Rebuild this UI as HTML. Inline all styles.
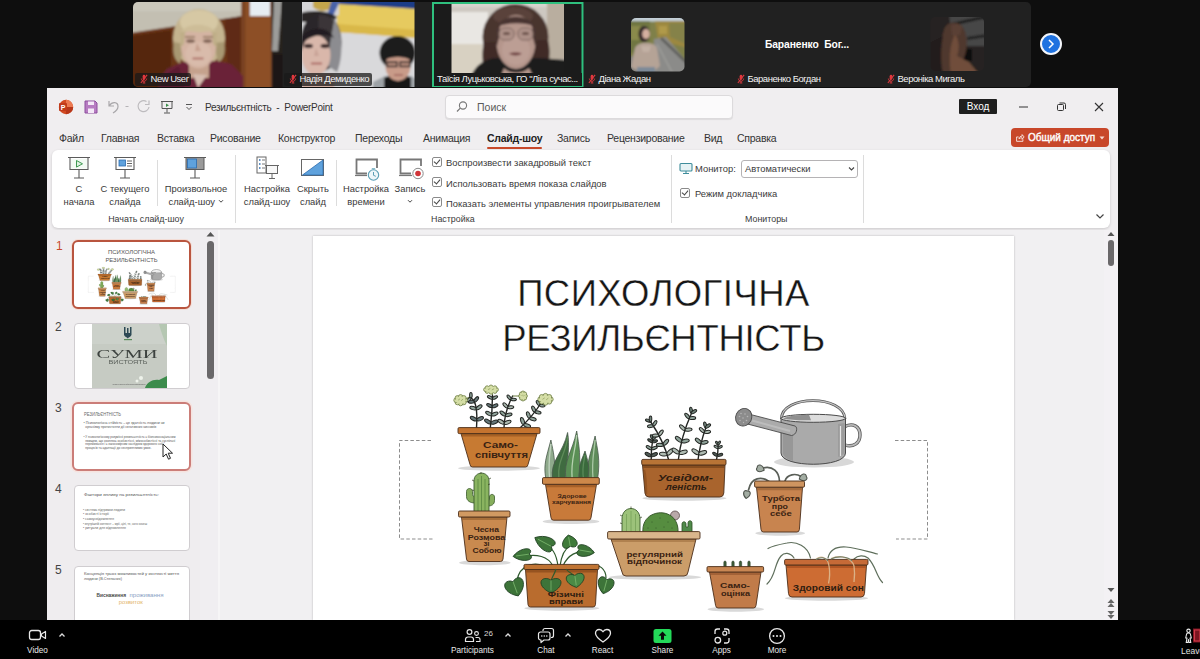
<!DOCTYPE html>
<html lang="uk"><head><meta charset="utf-8"><title>Zoom - PowerPoint</title>
<style>
*{box-sizing:border-box;margin:0;padding:0}
html,body{width:1200px;height:659px;overflow:hidden;background:#0e0e0e;font-family:"Liberation Sans",sans-serif;}
.abs{position:absolute}
#root{position:relative;width:1200px;height:659px;overflow:hidden;background:#0e0e0e}
/* video strip */
#strip{left:133px;top:2px;width:898px;height:85px;background:#212121;border-radius:5px;overflow:hidden}
.tile{position:absolute;top:0;height:85px;overflow:hidden}
.nm{position:absolute;bottom:1.500px;left:0;height:13px;font-size:9.500px;letter-spacing:-.48px;color:#f2f2f2;line-height:12.500px;white-space:nowrap;padding:0 3px 0 15.500px;background:rgba(25,25,25,.75);border-radius:2px}
.nm.nobg{background:none}
.mic{position:absolute;left:4.500px;top:1.500px;width:8px;height:10px}
/* ppt */
#ppt{left:47px;top:88px;width:1071px;height:532px;background:#f0eef0;overflow:hidden}
.tab{position:absolute;top:44px;font-size:10.5px;letter-spacing:-.25px;color:#333;white-space:nowrap;line-height:13px}
.rl{position:absolute;font-size:9.4px;color:#3a3a3a;white-space:nowrap;line-height:13px;text-align:center}
.chk{position:absolute;width:10px;height:10px;border:1px solid #8a8a8a;border-radius:2px;background:#fff}
.chk:after{content:"";position:absolute;left:2px;top:0px;width:3px;height:5px;border:solid #444;border-width:0 1.1px 1.1px 0;transform:rotate(40deg)}
.sep{position:absolute;width:1px;background:#dcdcdc}
.th{position:absolute;left:27px;width:116px;height:66px;background:#fff;border:1px solid #d0cdd0;border-radius:4px;overflow:hidden}
.tn{position:absolute;left:8px;font-size:12px;color:#444}
/* bottom bar */
#bar{left:0;top:620px;width:1200px;height:39px;background:#000}
#bar>*{margin-top:1px}
.bl{position:absolute;top:25px;font-size:8.2px;color:#e8e8e8;white-space:nowrap;transform:translateX(-50%);line-height:10px}
</style></head><body><div id="root">

<!-- VIDEO STRIP -->
<div id="strip" class="abs">
<svg class="abs" style="left:0;top:0" width="898" height="85" viewBox="0 0 898 85">
<defs>
<filter id="b1" x="-10%" y="-10%" width="120%" height="120%"><feGaussianBlur stdDeviation="1.100"/></filter>
<filter id="b2" x="-10%" y="-10%" width="120%" height="120%"><feGaussianBlur stdDeviation="2.200"/></filter>
<clipPath id="c1"><rect x="0" y="0" width="149.500" height="85"/></clipPath>
<clipPath id="c2"><rect x="169" y="0" width="112.500" height="85"/></clipPath>
<clipPath id="c3"><rect x="318.500" y="1.500" width="112.500" height="70"/></clipPath>
<clipPath id="c4"><rect x="498" y="16" width="53.500" height="53.500" rx="5"/></clipPath>
<clipPath id="c6"><rect x="797.500" y="15" width="53.500" height="54" rx="5"/></clipPath>
</defs>
<!-- tile 1 -->
<g clip-path="url(#c1)"><g filter="url(#b1)">
<rect x="-3" y="-3" width="155" height="91" fill="#c3bfb2"/>
<rect x="-3" y="-3" width="155" height="12" fill="#cbc8bc"/>
<path d="M-3 31L109 14v74H-3z" fill="#6a3419"/>
<path d="M-3 34L38 28v60H-3z" fill="#552710"/>
<path d="M92 17l17-3v74H96z" fill="#5e2c14"/>
<rect x="108.500" y="-3" width="31" height="91" fill="#8d4f26"/>
<rect x="108.500" y="-3" width="4" height="91" fill="#7a4220"/>
<rect x="117" y="-3" width="20" height="17" fill="#e6edf3"/>
<rect x="138.500" y="-3" width="14" height="91" fill="#26211f"/>
<path d="M141 -3h8l-4 52h-6z" fill="#9c9c9a"/>
<path d="M139 52h12v36h-12z" fill="#1d1918"/>
<ellipse cx="66" cy="36" rx="26" ry="29" fill="#c4b48f"/>
<ellipse cx="66" cy="20" rx="19" ry="12" fill="#d6c8a4"/>
<path d="M41 40c-2 10 0 18 6 22l4-20zM91 40c2 10 0 17-6 21l-4-20z" fill="#a89872"/>
<path d="M50 60l-16 7-8 10v12h84V74l-12-12-14-3z" fill="#6b2439"/>
<path d="M30 74l16-10 6 24H26z" fill="#5c1c30"/>
<rect x="56" y="58" width="20" height="18" fill="#c5a28d"/>
<ellipse cx="65.500" cy="45" rx="17.500" ry="21.500" fill="#d4b4a3"/>
<ellipse cx="65.500" cy="52" rx="13" ry="12" fill="#d9bbab"/>
<path d="M48 30c6-9 26-10 35 0-8-2-13 1-19 0s-11-1-16 0z" fill="#cdbd98"/>
<path d="M47 30c1 6 1 10 0 16l4-4 1-12zM84 30c-1 6-1 10 0 16l-4-4-1-12z" fill="#bfae88"/>
<path d="M52 35h10M70 35h10" stroke="#8a6f58" stroke-width="1.300"/>
<ellipse cx="57.500" cy="39" rx="4.500" ry="1.800" fill="#7d6152"/>
<ellipse cx="74.500" cy="39" rx="4.500" ry="1.800" fill="#7d6152"/>
<path d="M64 41l-2 8h6z" fill="#c6a08e"/>
<path d="M59.500 56.500h11" stroke="#a8665f" stroke-width="1.700" fill="none"/>
<path d="M60 72l5 14 9-13z" fill="#d6bdb0"/>
</g></g>
<!-- tile 2 -->
<g clip-path="url(#c2)"><g filter="url(#b1)">
<rect x="166" y="-3" width="119" height="91" fill="#d3d3d5"/>
<rect x="206" y="30" width="80" height="58" fill="#d9d9db"/>
<path d="M204 0L285 6v30L204 30z" fill="#e6ca5e"/>
<path d="M204 22l81 6v8l-81-6z" fill="#d9b84a"/>
<path d="M206 -3h79v10L206 2z" fill="#1f3d88"/>
<rect x="166" y="-3" width="40" height="16" fill="#d6d6d8"/>
<path d="M180 -3h20v8c-5 5-15 5-20 0z" fill="#c5a64c"/>
<path d="M199 -3h9l-8 17h-6z" fill="#4a62a8"/>
<path d="M168 11c10-3 26-3 36 4l-4 5h-32z" fill="#2a2627"/>
<ellipse cx="188" cy="40" rx="20.500" ry="29" fill="#2c2729"/>
<path d="M199 16c11 8 12 38 5 54l-9-6z" fill="#8c8c90"/>
<path d="M186 13c6 0 12 2 15 6l-4 22-12-10z" fill="#3a3537"/>
<ellipse cx="183" cy="53" rx="14.500" ry="20" fill="#d9b7aa"/>
<path d="M169 72h32v16h-32z" fill="#d2afa2"/>
<path d="M168 38c4-14 26-16 33-2-8-5-22-4-33 6z" fill="#231e20"/>
<ellipse cx="175.500" cy="44" rx="4.500" ry="2.200" fill="#3a2a2c"/>
<ellipse cx="192" cy="44" rx="4.500" ry="2.200" fill="#3a2a2c"/>
<path d="M183 46l-2 8h5z" fill="#c9a397"/>
<path d="M178 61.500h11" stroke="#a8605c" stroke-width="1.800"/>
<ellipse cx="264.500" cy="51" rx="18" ry="17" fill="#1e1b1b"/>
<path d="M240 88v-8l12-6h26l7 4v10z" fill="#9da2a6"/>
<path d="M251 88v-12c6-4 22-4 27 0v12z" fill="#151515"/>
<ellipse cx="265" cy="64" rx="12.500" ry="15" fill="#c99b89"/>
<path d="M250 52c6-8 23-8 29 0l-1 6c-8-4-18-4-27 0z" fill="#1e1b1b"/>
<path d="M254 60h10v4.500h-10zM267 60h10v4.500h-10z" fill="#b58a7a" stroke="#2a2424" stroke-width="1.300"/>
<path d="M261 73h9" stroke="#9a5f58" stroke-width="1.400"/>
</g></g>
<!-- tile 3 -->
<rect x="299" y="0" width="151.500" height="85" fill="#1b1b1b"/>
<g clip-path="url(#c3)"><g filter="url(#b1)">
<rect x="315" y="-3" width="120" height="80" fill="#cdc8c1"/>
<rect x="315" y="-3" width="120" height="8" fill="#d8d4cf"/>
<rect x="315" y="10" width="40" height="32" fill="#e9e7e3"/>
<rect x="315" y="42" width="34" height="35" fill="#d8d1c2"/>
<rect x="414" y="-3" width="20" height="60" fill="#b9ae9f"/>
<ellipse cx="382.500" cy="35" rx="33" ry="33" fill="#49342f"/>
<ellipse cx="380" cy="14" rx="20" ry="9" fill="#5a423b"/>
<path d="M351 40c-3 14-2 24 4 34h56c6-12 7-24 4-36z" fill="#3f2c28"/>
<path d="M338 74c6-14 18-18 28-18h40l28 2v18z" fill="#1b1b1d"/>
<ellipse cx="383" cy="40" rx="19.500" ry="27" fill="#b5968c"/>
<ellipse cx="383" cy="48" rx="14" ry="15" fill="#bc9e94"/>
<path d="M363 25c8-14 32-14 40 0-10-5-28-5-40 0z" fill="#4a3530"/>
<path d="M363 24c-1 8-1 14 1 20l4-16zM403 24c1 8 1 14-1 20l-4-16z" fill="#4a3530"/>
<rect x="366" y="26" width="15" height="12" rx="5" fill="#ad9188" stroke="#7d675f" stroke-width="1"/>
<rect x="385" y="26" width="15" height="12" rx="5" fill="#ad9188" stroke="#7d675f" stroke-width="1"/>
<ellipse cx="373.500" cy="31.500" rx="3.500" ry="1.500" fill="#6a5048"/>
<ellipse cx="392.500" cy="31.500" rx="3.500" ry="1.500" fill="#6a5048"/>
<path d="M376 51.500c3-1.500 10-1.500 13 0c-3 2.500-10 2.500-13 0z" fill="#6e3f40"/>
<path d="M371 66c6 6 18 6 25 0l4 8h-32z" fill="#b3958a"/>
</g></g>
<rect x="300" y="1" width="149.500" height="83.500" fill="none" stroke="#2fc07e" stroke-width="2"/>
<!-- tile 4 avatar -->
<g clip-path="url(#c4)"><g filter="url(#b1)">
<rect x="495" y="13" width="60" height="60" fill="#7f8049"/>
<rect x="495" y="13" width="60" height="6.500" fill="#c3cfd7"/>
<path d="M495 19h22v32h-22z" fill="#6f7642"/>
<path d="M498 24h10v14h-10z" fill="#8a8a4c"/>
<path d="M522 19h33v27l-30-8z" fill="#9c883f"/>
<path d="M536 21h19v22l-18-8z" fill="#85824a"/>
<path d="M526 24h8v8h-8z" fill="#b09a48"/>
<path d="M521 37l12-2 23 27v12h-36z" fill="#8b8b89"/>
<path d="M528 36l27 26" stroke="#5f5f5b" stroke-width="2.600"/>
<path d="M524 42l16 30" stroke="#9d9d9a" stroke-width="1.500"/>
<path d="M495 56l14-6v23h-14z" fill="#82827e"/>
<ellipse cx="511" cy="32" rx="5.500" ry="8" fill="#33272a"/>
<ellipse cx="513" cy="32" rx="3.800" ry="5" fill="#d4b0a0"/>
<path d="M502 46c3-7 19-7 22 0l3 18-6 5h-16l-7-4z" fill="#b5a396"/>
<path d="M508 44h10l-2 6h-6z" fill="#c2b0a4"/>
<path d="M504 65h18v8h-18z" fill="#7d8a98"/>
</g></g>
<!-- tile 6 avatar -->
<g clip-path="url(#c6)"><g filter="url(#b1)">
<rect x="794" y="12" width="60" height="60" fill="#272422"/>
<path d="M816 12h38v32h-34z" fill="#474747"/>
<path d="M818 21l36-8v3l-36 8z" fill="#1c1c1c"/>
<path d="M834 35l20-3v3l-20 3z" fill="#222"/>
<rect x="830" y="47" width="9" height="12" fill="#0e0e0e"/>
<path d="M811 28c2-8 12-10 18-4 6 8 6 22 2 32l-8 16h-14c-4-14-2-32 2-44z" fill="#4f382e"/>
<path d="M822 32c4 6 5 14 2 22l12 6 10 12h-28c-2-12-2-28 4-40z" fill="#6f4d3a"/>
<path d="M818 24c3-3 8-3 11 1l-2 8h-8z" fill="#5a4034"/>
<path d="M810 34c-2 10-3 24 0 38h-16v-30z" fill="#211e1d"/>
</g></g>
<!-- tile5 -->
</svg>
<div class="abs" style="left:600px;top:35.500px;width:148px;text-align:center;font-size:10.300px;font-weight:bold;color:#fff;line-height:14px;white-space:pre;letter-spacing:-.1px">Бараненко  Бог...</div>
<div class="nm" style="left:2px"><svg class="mic" viewBox="0 0 9 11"><rect x="3" y=".8" width="3" height="5.500" rx="1.500" fill="#e0383e"/><path d="M1.500 5c0 4 6 4 6 0M4.500 8v2M3 10h3" fill="none" stroke="#e0383e" stroke-width="1"/><path d="M8 .8L1 10" stroke="#e0383e" stroke-width="1.200"/></svg><span>New User</span></div>
<div class="nm" style="left:151px"><svg class="mic" viewBox="0 0 9 11"><rect x="3" y=".8" width="3" height="5.500" rx="1.500" fill="#e0383e"/><path d="M1.500 5c0 4 6 4 6 0M4.500 8v2M3 10h3" fill="none" stroke="#e0383e" stroke-width="1"/><path d="M8 .8L1 10" stroke="#e0383e" stroke-width="1.200"/></svg><span>Надія Демиденко</span></div>
<div class="nm nobg" style="left:301px;padding-left:3px;width:148px;background:#1b1b1b;border-radius:0;bottom:1.500px"><span>Таїсія Луцьковська, ГО "Ліга сучас...</span></div>
<div class="nm nobg" style="left:450px"><svg class="mic" viewBox="0 0 9 11"><rect x="3" y=".8" width="3" height="5.500" rx="1.500" fill="#e0383e"/><path d="M1.500 5c0 4 6 4 6 0M4.500 8v2M3 10h3" fill="none" stroke="#e0383e" stroke-width="1"/><path d="M8 .8L1 10" stroke="#e0383e" stroke-width="1.200"/></svg><span>Діана Жадан</span></div>
<div class="nm nobg" style="left:599px"><svg class="mic" viewBox="0 0 9 11"><rect x="3" y=".8" width="3" height="5.500" rx="1.500" fill="#e0383e"/><path d="M1.500 5c0 4 6 4 6 0M4.500 8v2M3 10h3" fill="none" stroke="#e0383e" stroke-width="1"/><path d="M8 .8L1 10" stroke="#e0383e" stroke-width="1.200"/></svg><span>Бараненко Богдан</span></div>
<div class="nm nobg" style="left:749px"><svg class="mic" viewBox="0 0 9 11"><rect x="3" y=".8" width="3" height="5.500" rx="1.500" fill="#e0383e"/><path d="M1.500 5c0 4 6 4 6 0M4.500 8v2M3 10h3" fill="none" stroke="#e0383e" stroke-width="1"/><path d="M8 .8L1 10" stroke="#e0383e" stroke-width="1.200"/></svg><span>Вероніка Мигаль</span></div>
</div>
<div class="abs" id="nextbtn" style="left:1040px;top:33px;width:22px;height:22px;border-radius:50%;background:#1f72e0;border:2px solid #f4f6fb"></div>
<svg class="abs" style="left:1047px;top:39px" width="8" height="10" viewBox="0 0 8 10"><path d="M2 1l4 4-4 4" fill="none" stroke="#fff" stroke-width="1.500"/></svg>

<!-- POWERPOINT WINDOW -->
<div id="ppt" class="abs">

  <!-- title bar -->
  <svg class="abs" style="left:11px;top:11px" width="16" height="16" viewBox="0 0 16 16"><circle cx="8" cy="8" r="7.2" fill="#d24a22"/><path d="M8 .8a7.2 7.2 0 0 1 7.2 7.2H8z" fill="#ec7a52"/><path d="M8 15.2A7.2 7.2 0 0 0 15.2 8H8z" fill="#b7371a"/><rect x="1" y="4" width="8" height="8" rx="1" fill="#c13b1b"/><text x="5" y="10.6" font-size="7" font-weight="bold" fill="#fff" text-anchor="middle" font-family="Liberation Sans, sans-serif">P</text></svg>
  <svg class="abs" style="left:37px;top:12px" width="14" height="14" viewBox="0 0 14 14"><path d="M1 1h10l2 2v10H1z" fill="#b77cc2" stroke="#8d4f9e" stroke-width="1"/><rect x="4" y="1.5" width="6" height="3.5" fill="#f4e9f7"/><rect x="4" y="8.5" width="6" height="4.5" fill="#f4e9f7"/></svg>
  <svg class="abs" style="left:59px;top:11px" width="30" height="16" viewBox="0 0 30 16"><path d="M3 2v5h5M3.5 6.5C6 2.500 12 2.500 12 7.500c0 3-2.500 5-5 6.500" fill="none" stroke="#a9a7aa" stroke-width="1.200"/><path d="M19.500 7.500h3" stroke="#b5b3b6" stroke-width="1"/></svg>
  <svg class="abs" style="left:89px;top:11px" width="16" height="16" viewBox="0 0 16 16"><path d="M10.500 2.500A5.500 5.500 0 1 0 13 8M13 1.500v4h-4" fill="none" stroke="#bdbbbe" stroke-width="1.200"/></svg>
  <svg class="abs" style="left:112px;top:11px" width="16" height="16" viewBox="0 0 16 16"><path d="M2 2.500h12M3 2.500v7h10v-7M8 9.500v4M5 14h6" fill="none" stroke="#555" stroke-width="1"/><path d="M7 4.500l3 1.700-3 1.700z" fill="#3b8f4a"/></svg>
  <svg class="abs" style="left:137px;top:14px" width="10" height="10" viewBox="0 0 10 10"><path d="M2 2.500h6M2.500 5l2.500 2.500L7.500 5" fill="none" stroke="#555" stroke-width="1"/></svg>
  <div class="abs" style="left:158px;top:13px;font-size:10px;letter-spacing:-.3px;color:#333;white-space:nowrap;line-height:13px">Резильєнтність&nbsp; -&nbsp; PowerPoint</div>
  <div class="abs" style="left:398px;top:7px;width:288px;height:24px;background:#fbfafb;border:1px solid #dcdadc;border-radius:4px;box-shadow:0 1px 1px rgba(0,0,0,.08)"></div>
  <svg class="abs" style="left:408px;top:12px" width="14" height="14" viewBox="0 0 14 14"><circle cx="8" cy="5.500" r="3.600" fill="none" stroke="#777" stroke-width="1.100"/><path d="M5.300 8.200L2 11.500" stroke="#777" stroke-width="1.200"/></svg>
  <div class="abs" style="left:430px;top:13px;font-size:10.500px;color:#5a5a5a;line-height:13px">Поиск</div>
  <div class="abs" style="left:912px;top:11px;width:38px;height:15px;background:#1f1f1f;color:#fff;font-size:10px;line-height:15px;text-align:center;border-radius:1px">Вход</div>
  <svg class="abs" style="left:968px;top:12px" width="100" height="14" viewBox="0 0 100 14"><path d="M4 7h9" stroke="#333" stroke-width="1"/><rect x="42.500" y="4.500" width="6" height="6" rx="1" fill="none" stroke="#333"/><path d="M44.500 3h4.500a1.500 1.500 0 0 1 1.500 1.500v4.500" fill="none" stroke="#333"/><path d="M80 3l8 8M88 3l-8 8" stroke="#333" stroke-width="1.100"/></svg>
  <!-- tabs -->
  <div class="tab" style="left:12px">Файл</div>
  <div class="tab" style="left:54px">Главная</div>
  <div class="tab" style="left:110px">Вставка</div>
  <div class="tab" style="left:163px">Рисование</div>
  <div class="tab" style="left:231px">Конструктор</div>
  <div class="tab" style="left:308px">Переходы</div>
  <div class="tab" style="left:376px">Анимация</div>
  <div class="tab" style="left:440px;font-weight:bold;color:#222">Слайд-шоу</div>
  <div class="abs" style="left:440px;top:59px;width:55px;height:2px;background:#c8492a;border-radius:1px"></div>
  <div class="tab" style="left:510px">Запись</div>
  <div class="tab" style="left:560px">Рецензирование</div>
  <div class="tab" style="left:657px">Вид</div>
  <div class="tab" style="left:690px">Справка</div>
  <div class="abs" style="left:964px;top:40px;width:98px;height:19px;background:#c8472a;border-radius:4px"></div>
  <svg class="abs" style="left:968px;top:45px" width="9.500" height="9.500" viewBox="0 0 12 12"><path d="M4.500 5H2v5.500h8V8M5 7.500C5 5 7 4 9 4V2l2.500 3L9 8V6C7.500 6 6 6.200 5 7.500z" fill="none" stroke="#fff" stroke-width="1"/></svg>
  <div class="abs" style="left:981px;top:43px;font-size:10px;color:#fff;line-height:13px;white-space:nowrap;-webkit-text-stroke:.35px #fff">Общий доступ</div>
  <svg class="abs" style="left:1052px;top:48px" width="6" height="4" viewBox="0 0 6 4"><path d="M.5 .5h5L3 3.500z" fill="#f6d9d0"/></svg>
  <div class="abs" id="ribbon" style="left:5px;top:62px;width:1058px;height:78px;background:#fff;border-radius:6px;box-shadow:0 1px 3px rgba(0,0,0,.16)"></div>

  <!-- ribbon content (coords relative to ppt) -->
  <svg class="abs" style="left:18px;top:66px" width="30" height="28" viewBox="0 0 30 28"><path d="M3 3.500h22M5 3.500v12h18v-12M14 15.500v8M9 24h10" fill="none" stroke="#5b5b5b" stroke-width="1.100"/><rect x="6" y="5" width="16" height="9.500" fill="#f3faf4"/><path d="M11.500 6.500l6 3.300-6 3.300z" fill="#dff0e1" stroke="#3d9950" stroke-width="1"/></svg>
  <svg class="abs" style="left:64px;top:66px" width="30" height="28" viewBox="0 0 30 28"><path d="M3 3.500h22M5 3.500v12h18v-12M14 15.500v8M9 24h10" fill="none" stroke="#5b5b5b" stroke-width="1.100"/><rect x="8" y="6" width="6.500" height="6" fill="#5fa2dd" stroke="#2b6cb0" stroke-width=".8"/><path d="M16 7h5M16 9.500h5M16 12h5" stroke="#666" stroke-width="1"/></svg>
  <svg class="abs" style="left:134px;top:66px" width="30" height="28" viewBox="0 0 30 28"><path d="M3 3.500h22M14 15.500v8M9 24h10" fill="none" stroke="#5b5b5b" stroke-width="1.100"/><rect x="5" y="3.500" width="18" height="12" fill="#9a9a9a" stroke="#5b5b5b" stroke-width="1"/><rect x="6.500" y="5" width="9" height="9" fill="#5fa2dd" stroke="#2b6cb0" stroke-width=".8"/></svg>
  <svg class="abs" style="left:207px;top:66px" width="30" height="30" viewBox="0 0 30 30"><rect x="3" y="3" width="9" height="16" fill="#fff" stroke="#666" stroke-width="1"/><path d="M5 6h1.500M5 10h1.500M5 14h1.500" stroke="#2b6cb0" stroke-width="1.500"/><path d="M8 6h3M8 10h3M8 14h3" stroke="#777" stroke-width="1"/><rect x="12.500" y="11.500" width="11" height="8" fill="#f8f8f8" stroke="#666" stroke-width="1"/><path d="M11 11.500h14M18 19.500v5M15 24.500h6" stroke="#666" stroke-width="1" fill="none"/></svg>
  <svg class="abs" style="left:252px;top:69px" width="28" height="22" viewBox="0 0 28 22"><rect x="2.500" y="2.500" width="22" height="16" fill="#fff" stroke="#666" stroke-width="1"/><path d="M24 3v15H3.500z" fill="#5fa2dd" stroke="#2b6cb0" stroke-width=".8"/></svg>
  <svg class="abs" style="left:306px;top:68px" width="30" height="28" viewBox="0 0 30 28"><path d="M24 12V3.500H3.500v14H14" fill="none" stroke="#777" stroke-width="1.800"/><path d="M2 19.500h12" stroke="#777" stroke-width="1.200"/><circle cx="20.500" cy="19" r="5.200" fill="#eef7fa" stroke="#5b9fb5" stroke-width="1.100"/><path d="M20.500 16v3.300l2.300 1M18.800 12.800h3.400" fill="none" stroke="#5b9fb5" stroke-width="1"/></svg>
  <svg class="abs" style="left:350px;top:68px" width="30" height="28" viewBox="0 0 30 28"><path d="M24 10V3.500H3.500v14H14" fill="none" stroke="#777" stroke-width="1.800"/><path d="M2 19.500h13" stroke="#777" stroke-width="1.200"/><circle cx="21" cy="17.500" r="5.200" fill="#fff" stroke="#8a8a8a" stroke-width="1"/><circle cx="21" cy="17.500" r="2.800" fill="#d13438"/></svg>
  <div class="rl" style="left:2px;top:94px;width:60px">С<br>начала</div>
  <div class="rl" style="left:43px;top:94px;width:70px">С текущего<br>слайда</div>
  <div class="rl" style="left:109px;top:94px;width:80px">Произвольное<br>слайд-шоу <svg width="6" height="5" viewBox="0 0 6 5" style="display:inline-block;vertical-align:1px"><path d="M1 1.200l2 2 2-2" fill="none" stroke="#444" stroke-width="1"/></svg></div>
  <div class="rl" style="left:185px;top:94px;width:70px">Настройка<br>слайд-шоу</div>
  <div class="rl" style="left:236px;top:94px;width:60px">Скрыть<br>слайд</div>
  <div class="rl" style="left:284px;top:94px;width:70px">Настройка<br>времени</div>
  <div class="rl" style="left:338px;top:94px;width:50px">Запись<br><svg width="6" height="5" viewBox="0 0 6 5" style="display:inline-block;vertical-align:1px"><path d="M1 1.200l2 2 2-2" fill="none" stroke="#444" stroke-width="1"/></svg></div>
  <div class="rl" style="left:49px;top:125px;width:100px;font-size:8.900px">Начать слайд-шоу</div>
  <div class="sep" style="left:110px;top:72px;height:46px"></div>
  <div class="sep" style="left:188px;top:67px;height:68px"></div>
  <div class="sep" style="left:289px;top:72px;height:46px"></div>
  <div class="chk" style="left:385px;top:69px"></div>
  <div class="chk" style="left:385px;top:89px"></div>
  <div class="chk" style="left:385px;top:109px"></div>
  <div class="rl" style="left:399px;top:68px;text-align:left">Воспроизвести закадровый текст</div>
  <div class="rl" style="left:399px;top:89px;text-align:left">Использовать время показа слайдов</div>
  <div class="rl" style="left:399px;top:109px;text-align:left">Показать элементы управления проигрывателем</div>
  <div class="rl" style="left:384px;top:125px;text-align:left;font-size:8.900px">Настройка</div>
  <div class="sep" style="left:624px;top:67px;height:68px"></div>
  <svg class="abs" style="left:632px;top:74px" width="14" height="13" viewBox="0 0 14 13"><rect x="1" y="1.500" width="12" height="7.500" rx="1" fill="#e6f2f4" stroke="#3f8d9b" stroke-width="1.100"/><path d="M7 9v2M4 11.500h6" stroke="#3f8d9b" stroke-width="1.100"/></svg>
  <div class="rl" style="left:648px;top:74px;text-align:left">Монитор:</div>
  <div class="abs" style="left:694px;top:72px;width:117px;height:18px;background:#fff;border:1px solid #b5b3b5;border-radius:3px"></div>
  <div class="rl" style="left:698px;top:74px;text-align:left">Автоматически</div>
  <svg class="abs" style="left:801px;top:78px" width="7" height="6" viewBox="0 0 7 6"><path d="M1 1.500l2.500 2.500L6 1.500" fill="none" stroke="#444" stroke-width="1.100"/></svg>
  <div class="chk" style="left:633px;top:100px"></div>
  <div class="rl" style="left:648px;top:99px;text-align:left">Режим докладчика</div>
  <div class="rl" style="left:698px;top:125px;text-align:left;font-size:8.900px">Мониторы</div>
  <div class="sep" style="left:816px;top:67px;height:68px"></div>
  <svg class="abs" style="left:1048px;top:125px" width="10" height="7" viewBox="0 0 10 7"><path d="M1.500 1.500l3.500 3.500 3.500-3.500" fill="none" stroke="#444" stroke-width="1.200"/></svg>
  <div class="abs" id="panel" style="left:0;top:142px;width:171px;height:390px;background:#efedef"></div>
  <div class="abs" id="work" style="left:172px;top:142px;width:899px;height:390px;background:#f1f0f2"></div>

  <!-- slide thumbnails -->
  <div class="tn" style="left:9px;top:151px;color:#c8492a">1</div>
  <div class="th" id="th1" style="left:25px;top:152px;width:119px;height:69px;border:2.500px solid #b9553f;border-radius:6px;box-shadow:0 0 0 1px #f3ddd6"><svg width="115" height="65" viewBox="0 0 115 65" style="position:absolute;left:0;top:0"><g transform="translate(-51.58 -38.39) scale(0.1648)" font-family="Liberation Sans, sans-serif"><!--MINI-->
<path d="M431 440.500H399.500V539H432.500" fill="none" stroke="#8d8d8d" stroke-width="1" stroke-dasharray="3.500 2.200"/>
<path d="M895 440.500H927.500V539H896" fill="none" stroke="#8d8d8d" stroke-width="1" stroke-dasharray="3.500 2.200"/>
<path d="M476.5 428.0Q478.5 398.0 469.0 397.5" fill="none" stroke="#232623" stroke-width="1.4" stroke-linecap="round"/>
<ellipse cx="473.6" cy="418.7" rx="3.6" ry="1.7" transform="rotate(-153 473.6 418.7)" fill="#66787a" stroke="#232623" stroke-width="1"/>
<ellipse cx="480.1" cy="418.8" rx="3.6" ry="1.7" transform="rotate(-25 480.1 418.8)" fill="#66787a" stroke="#232623" stroke-width="1"/>
<ellipse cx="473.1" cy="408.1" rx="3.4" ry="1.6" transform="rotate(-162 473.1 408.1)" fill="#8fa39a" stroke="#232623" stroke-width="1"/>
<ellipse cx="479.1" cy="407.3" rx="3.4" ry="1.6" transform="rotate(-34 479.1 407.3)" fill="#8fa39a" stroke="#232623" stroke-width="1"/>
<ellipse cx="471.3" cy="401.7" rx="3.1" ry="1.5" transform="rotate(-179 471.3 401.7)" fill="#66787a" stroke="#232623" stroke-width="1"/>
<ellipse cx="476.3" cy="399.3" rx="3.1" ry="1.5" transform="rotate(-51 476.3 399.3)" fill="#66787a" stroke="#232623" stroke-width="1"/>
<ellipse cx="468.8" cy="399.7" rx="2.8" ry="1.3" transform="rotate(-219 468.8 399.7)" fill="#8fa39a" stroke="#232623" stroke-width="1"/>
<ellipse cx="470.9" cy="395.2" rx="2.8" ry="1.3" transform="rotate(-91 470.9 395.2)" fill="#8fa39a" stroke="#232623" stroke-width="1"/>
<path d="M469.0 397.5L460.6 400.2" stroke="#6f7f45" stroke-width="1"/>
<circle cx="465.1" cy="400.2" r="2.3" fill="#d5dea6" stroke="#6f7f45" stroke-width=".8"/>
<circle cx="463.8" cy="402.5" r="2.3" fill="#d5dea6" stroke="#6f7f45" stroke-width=".8"/>
<circle cx="460.6" cy="403.5" r="2.3" fill="#d5dea6" stroke="#6f7f45" stroke-width=".8"/>
<circle cx="457.4" cy="402.5" r="2.3" fill="#d5dea6" stroke="#6f7f45" stroke-width=".8"/>
<circle cx="456.1" cy="400.2" r="2.3" fill="#d5dea6" stroke="#6f7f45" stroke-width=".8"/>
<circle cx="457.4" cy="397.9" r="2.3" fill="#d5dea6" stroke="#6f7f45" stroke-width=".8"/>
<circle cx="460.6" cy="396.9" r="2.3" fill="#d5dea6" stroke="#6f7f45" stroke-width=".8"/>
<circle cx="463.8" cy="397.9" r="2.3" fill="#d5dea6" stroke="#6f7f45" stroke-width=".8"/>
<ellipse cx="460.6" cy="400.2" rx="5.0" ry="3.7" fill="#d5dea6"/>
<path d="M458.1 400.2l1.9 -1.4M461.2 400.7l1.9 -1.6" stroke="#8a9a5a" stroke-width=".7" fill="none"/>
<path d="M490.3 428.0Q492.4 411.5 492.5 395.0" fill="none" stroke="#232623" stroke-width="1.4" stroke-linecap="round"/>
<ellipse cx="487.8" cy="421.5" rx="3.6" ry="1.7" transform="rotate(-148 487.8 421.5)" fill="#66787a" stroke="#232623" stroke-width="1"/>
<ellipse cx="494.3" cy="422.2" rx="3.6" ry="1.7" transform="rotate(-20 494.3 422.2)" fill="#66787a" stroke="#232623" stroke-width="1"/>
<ellipse cx="488.7" cy="413.5" rx="3.4" ry="1.6" transform="rotate(-149 488.7 413.5)" fill="#8fa39a" stroke="#232623" stroke-width="1"/>
<ellipse cx="494.8" cy="414.0" rx="3.4" ry="1.6" transform="rotate(-21 494.8 414.0)" fill="#8fa39a" stroke="#232623" stroke-width="1"/>
<ellipse cx="489.5" cy="405.5" rx="3.1" ry="1.5" transform="rotate(-151 489.5 405.5)" fill="#66787a" stroke="#232623" stroke-width="1"/>
<ellipse cx="495.0" cy="405.8" rx="3.1" ry="1.5" transform="rotate(-23 495.0 405.8)" fill="#66787a" stroke="#232623" stroke-width="1"/>
<ellipse cx="490.0" cy="397.4" rx="2.8" ry="1.3" transform="rotate(-153 490.0 397.4)" fill="#8fa39a" stroke="#232623" stroke-width="1"/>
<ellipse cx="495.0" cy="397.5" rx="2.8" ry="1.3" transform="rotate(-25 495.0 397.5)" fill="#8fa39a" stroke="#232623" stroke-width="1"/>
<path d="M492.5 395.0L491.0 389.6" stroke="#6f7f45" stroke-width="1"/>
<circle cx="496.5" cy="389.6" r="1.9" fill="#d5dea6" stroke="#6f7f45" stroke-width=".8"/>
<circle cx="494.9" cy="391.5" r="1.9" fill="#d5dea6" stroke="#6f7f45" stroke-width=".8"/>
<circle cx="491.0" cy="392.3" r="1.9" fill="#d5dea6" stroke="#6f7f45" stroke-width=".8"/>
<circle cx="487.1" cy="391.5" r="1.9" fill="#d5dea6" stroke="#6f7f45" stroke-width=".8"/>
<circle cx="485.5" cy="389.6" r="1.9" fill="#d5dea6" stroke="#6f7f45" stroke-width=".8"/>
<circle cx="487.1" cy="387.7" r="1.9" fill="#d5dea6" stroke="#6f7f45" stroke-width=".8"/>
<circle cx="491.0" cy="386.9" r="1.9" fill="#d5dea6" stroke="#6f7f45" stroke-width=".8"/>
<circle cx="494.9" cy="387.7" r="1.9" fill="#d5dea6" stroke="#6f7f45" stroke-width=".8"/>
<ellipse cx="491.0" cy="389.6" rx="6.1" ry="3.0" fill="#d5dea6"/>
<path d="M488.0 389.6l2.3 -1.1M491.8 390.0l2.3 -1.3" stroke="#8a9a5a" stroke-width=".7" fill="none"/>
<path d="M504.0 428.0Q504.3 412.0 512.6 396.0" fill="none" stroke="#232623" stroke-width="1.4" stroke-linecap="round"/>
<ellipse cx="501.1" cy="421.7" rx="3.6" ry="1.7" transform="rotate(-149 501.1 421.7)" fill="#aebbb2" stroke="#232623" stroke-width="1"/>
<ellipse cx="507.6" cy="422.3" rx="3.6" ry="1.7" transform="rotate(-21 507.6 422.3)" fill="#aebbb2" stroke="#232623" stroke-width="1"/>
<ellipse cx="502.8" cy="413.5" rx="3.4" ry="1.6" transform="rotate(-142 502.8 413.5)" fill="#8fa39a" stroke="#232623" stroke-width="1"/>
<ellipse cx="508.7" cy="414.8" rx="3.4" ry="1.6" transform="rotate(-14 508.7 414.8)" fill="#8fa39a" stroke="#232623" stroke-width="1"/>
<ellipse cx="505.4" cy="405.4" rx="3.1" ry="1.5" transform="rotate(-135 505.4 405.4)" fill="#aebbb2" stroke="#232623" stroke-width="1"/>
<ellipse cx="510.7" cy="407.2" rx="3.1" ry="1.5" transform="rotate(-7 510.7 407.2)" fill="#aebbb2" stroke="#232623" stroke-width="1"/>
<ellipse cx="509.1" cy="397.4" rx="2.8" ry="1.3" transform="rotate(-129 509.1 397.4)" fill="#8fa39a" stroke="#232623" stroke-width="1"/>
<ellipse cx="513.6" cy="399.5" rx="2.8" ry="1.3" transform="rotate(-1 513.6 399.5)" fill="#8fa39a" stroke="#232623" stroke-width="1"/>
<path d="M512.6 396.0L523.0 396.0" stroke="#6f7f45" stroke-width="1"/>
<circle cx="525.6" cy="396.0" r="1.8" fill="#d5dea6" stroke="#6f7f45" stroke-width=".8"/>
<circle cx="524.8" cy="398.2" r="1.8" fill="#d5dea6" stroke="#6f7f45" stroke-width=".8"/>
<circle cx="523.0" cy="399.2" r="1.8" fill="#d5dea6" stroke="#6f7f45" stroke-width=".8"/>
<circle cx="521.2" cy="398.2" r="1.8" fill="#d5dea6" stroke="#6f7f45" stroke-width=".8"/>
<circle cx="520.4" cy="396.0" r="1.8" fill="#d5dea6" stroke="#6f7f45" stroke-width=".8"/>
<circle cx="521.2" cy="393.8" r="1.8" fill="#d5dea6" stroke="#6f7f45" stroke-width=".8"/>
<circle cx="523.0" cy="392.8" r="1.8" fill="#d5dea6" stroke="#6f7f45" stroke-width=".8"/>
<circle cx="524.8" cy="393.8" r="1.8" fill="#d5dea6" stroke="#6f7f45" stroke-width=".8"/>
<ellipse cx="523.0" cy="396.0" rx="2.9" ry="3.5" fill="#d5dea6"/>
<path d="M521.6 396.0l1.1 -1.3M523.4 396.4l1.1 -1.5" stroke="#8a9a5a" stroke-width=".7" fill="none"/>
<path d="M520.0 428.0Q533.6 415.2 541.3 402.5" fill="none" stroke="#232623" stroke-width="1.4" stroke-linecap="round"/>
<ellipse cx="522.5" cy="421.0" rx="3.6" ry="1.7" transform="rotate(-109 522.5 421.0)" fill="#8fa39a" stroke="#232623" stroke-width="1"/>
<ellipse cx="527.1" cy="425.7" rx="3.6" ry="1.7" transform="rotate(19 527.1 425.7)" fill="#8fa39a" stroke="#232623" stroke-width="1"/>
<ellipse cx="528.4" cy="415.0" rx="3.4" ry="1.6" transform="rotate(-112 528.4 415.0)" fill="#8fa39a" stroke="#232623" stroke-width="1"/>
<ellipse cx="532.9" cy="419.0" rx="3.4" ry="1.6" transform="rotate(16 532.9 419.0)" fill="#8fa39a" stroke="#232623" stroke-width="1"/>
<ellipse cx="533.6" cy="409.0" rx="3.1" ry="1.5" transform="rotate(-116 533.6 409.0)" fill="#8fa39a" stroke="#232623" stroke-width="1"/>
<ellipse cx="538.0" cy="412.4" rx="3.1" ry="1.5" transform="rotate(12 538.0 412.4)" fill="#8fa39a" stroke="#232623" stroke-width="1"/>
<ellipse cx="538.1" cy="403.0" rx="2.8" ry="1.3" transform="rotate(-121 538.1 403.0)" fill="#8fa39a" stroke="#232623" stroke-width="1"/>
<ellipse cx="542.3" cy="405.7" rx="2.8" ry="1.3" transform="rotate(7 542.3 405.7)" fill="#8fa39a" stroke="#232623" stroke-width="1"/>
<path d="M541.3 402.5L545.5 399.3" stroke="#6f7f45" stroke-width="1"/>
<circle cx="550.8" cy="399.3" r="2.4" fill="#d5dea6" stroke="#6f7f45" stroke-width=".8"/>
<circle cx="549.3" cy="401.7" r="2.4" fill="#d5dea6" stroke="#6f7f45" stroke-width=".8"/>
<circle cx="545.5" cy="402.8" r="2.4" fill="#d5dea6" stroke="#6f7f45" stroke-width=".8"/>
<circle cx="541.7" cy="401.7" r="2.4" fill="#d5dea6" stroke="#6f7f45" stroke-width=".8"/>
<circle cx="540.2" cy="399.3" r="2.4" fill="#d5dea6" stroke="#6f7f45" stroke-width=".8"/>
<circle cx="541.7" cy="396.9" r="2.4" fill="#d5dea6" stroke="#6f7f45" stroke-width=".8"/>
<circle cx="545.5" cy="395.8" r="2.4" fill="#d5dea6" stroke="#6f7f45" stroke-width=".8"/>
<circle cx="549.3" cy="396.9" r="2.4" fill="#d5dea6" stroke="#6f7f45" stroke-width=".8"/>
<ellipse cx="545.5" cy="399.3" rx="5.9" ry="3.8" fill="#d5dea6"/>
<path d="M542.5 399.3l2.2 -1.4M546.2 399.8l2.2 -1.7" stroke="#8a9a5a" stroke-width=".7" fill="none"/>
<ellipse cx="499.0" cy="468.2" rx="41.0" ry="2.6" fill="#d9d9d9"/>
<path d="M461.0 433.6L470.0 464.5Q470.3 467.0 472.5 467.0L525.5 467.0Q527.7 467.0 528.0 464.5L537.0 433.6z" fill="#c77a32" stroke="#4b2e1a" stroke-width=".9" stroke-linejoin="round"/>
<path d="M461.6 434.1L536.4 434.1L536.1 436.6L461.9 436.6z" fill="#8a4a1a" opacity=".55"/>
<rect x="458.0" y="427.6" width="82.0" height="6.0" rx="1.2" fill="#c4732f" stroke="#4b2e1a" stroke-width=".9"/>
<text x="483.0" y="448.0" font-size="9.3" font-weight="bold" textLength="35.0" lengthAdjust="spacingAndGlyphs" fill="#3a2212" >Само-</text>
<text x="475.0" y="457.5" font-size="9.3" font-weight="bold" textLength="53.0" lengthAdjust="spacingAndGlyphs" fill="#3a2212" >співчуття</text>
<path d="M545.8 479C543.3 463.4 546.4 457.6 550.9 440.0C553.1 451.7 556.4 461.4 553.4 479z" fill="#8faa8c" stroke="#4a5a4c" stroke-width=".8"/>
<path d="M549.6 478C548.1 463.4 549.4 457.6 550.9 444.0" fill="none" stroke="#c2d4c0" stroke-width="1.3"/>
<path d="M588.4 479C585.9 461.8 590.6 455.4 595.1 436.0C597.3 448.9 600.6 459.6 597.6 479z" fill="#5f8c5a" stroke="#4a5a4c" stroke-width=".8"/>
<path d="M593.0 478C591.5 461.8 593.6 455.4 595.1 440.0" fill="none" stroke="#a9c7a4" stroke-width="1.3"/>
<path d="M552.5 479C550.0 460.4 563.1 453.4 567.6 432.5C569.8 446.4 568.0 458.1 565.0 479z" fill="#3f6b40" stroke="#4a5a4c" stroke-width=".8"/>
<path d="M558.8 478C557.2 460.4 566.1 453.4 567.6 436.5" fill="none" stroke="#5f8c5a" stroke-width="1.3"/>
<path d="M579.2 479C576.7 467.8 580.5 463.6 585.0 451.0C587.2 459.4 590.6 466.4 587.6 479z" fill="#3a6a3c" stroke="#4a5a4c" stroke-width=".8"/>
<path d="M583.4 478C581.9 467.8 583.5 463.6 585.0 455.0" fill="none" stroke="#5a8a58" stroke-width="1.3"/>
<path d="M565.9 479C563.4 459.8 572.2 452.6 576.7 431.0C578.9 445.4 581.4 457.4 578.4 479z" fill="#5a8f55" stroke="#4a5a4c" stroke-width=".8"/>
<path d="M572.1 478C570.6 459.8 575.2 452.6 576.7 435.0" fill="none" stroke="#b4d0ae" stroke-width="1.3"/>
<ellipse cx="571.0" cy="521.4" rx="28.4" ry="2.6" fill="#d9d9d9"/>
<path d="M545.5 484.3L551.0 517.7Q551.3 520.2 553.5 520.2L588.5 520.2Q590.7 520.2 591.0 517.7L596.5 484.3z" fill="#c87a3a" stroke="#4b2e1a" stroke-width=".9" stroke-linejoin="round"/>
<path d="M546.1 484.8L595.9 484.8L595.6 487.3L546.4 487.3z" fill="#8a4a1a" opacity=".55"/>
<rect x="542.5" y="477.6" width="56.8" height="6.7" rx="1.2" fill="#cd884a" stroke="#4b2e1a" stroke-width=".9"/>
<text x="557.5" y="498.0" font-size="5.6" font-weight="bold" textLength="29.1" lengthAdjust="spacingAndGlyphs" fill="#3a2212" >Здорове</text>
<text x="552.0" y="503.7" font-size="5.6" font-weight="bold" textLength="39.0" lengthAdjust="spacingAndGlyphs" fill="#3a2212" >харчування</text>
<path d="M475 503c-4.500 0-8.500-2-8.500-6.500v-5c0-4 6-4 6 0v3c0 1.500 1 2 2.500 2z" fill="#86ae5c" stroke="#3a5a2c" stroke-width=".8"/>
<path d="M488 506c3.500 0 6.500-1.500 6.500-5.500v-3.500c0-3.500-5-3.500-5 0v2c0 1.200-.7 1.800-1.500 1.800z" fill="#86ae5c" stroke="#3a5a2c" stroke-width=".8"/>
<path d="M474 512v-31c0-10.500 15-10.500 15 0v31z" fill="#8ab460" stroke="#3a5a2c" stroke-width=".9"/>
<path d="M478 511v-32M481.500 511v-35M485 511v-32" stroke="#5f8c44" stroke-width=".9" fill="none"/>
<path d="M472 480l2 1M472 490l2 .5M490 484l-2 .8M491 478l-2 1M481 472v2" stroke="#33401f" stroke-width=".7"/>
<ellipse cx="484.8" cy="562.7" rx="25.8" ry="2.6" fill="#d9d9d9"/>
<path d="M461.5 517.0L466.5 559.0Q466.8 561.5 469.0 561.5L500.5 561.5Q502.7 561.5 503.0 559.0L507.0 517.0z" fill="#c98a4f" stroke="#4b2e1a" stroke-width=".9" stroke-linejoin="round"/>
<path d="M462.1 517.5L506.4 517.5L506.1 520.0L462.4 520.0z" fill="#8a5a2a" opacity=".55"/>
<rect x="458.5" y="511.0" width="51.5" height="6.0" rx="1.2" fill="#d19a62" stroke="#4b2e1a" stroke-width=".9"/>
<text x="473.7" y="532.2" font-size="6.8" font-weight="bold" textLength="25.3" lengthAdjust="spacingAndGlyphs" fill="#3a2212" >Чесна</text>
<text x="467.7" y="539.6" font-size="6.8" font-weight="bold" textLength="37.6" lengthAdjust="spacingAndGlyphs" fill="#3a2212" >Розмова</text>
<text x="483.4" y="546.4" font-size="6.8" font-weight="bold" textLength="6.1" lengthAdjust="spacingAndGlyphs" fill="#3a2212" >зі</text>
<text x="472.5" y="553.4" font-size="6.8" font-weight="bold" textLength="29.1" lengthAdjust="spacingAndGlyphs" fill="#3a2212" >Собою</text>
<path d="M558 566C556 552 552 547 546 546M560 566C562 552 566 548 570 546M563 566C568 554 578 551 584 552M553 566C548 556 536 554 526 556M548 567C532 560 520 566 517 580M588 567C600 562 606 570 606 578" fill="none" stroke="#2f5a2e" stroke-width="1.200"/>
<g transform="translate(545.0 543.0) rotate(118)"><path d="M0 11.5C-9.8 2.3 -8.1 -12.7 -1.6 -8.7L0 -6.9L1.6 -8.7C8.1 -12.7 9.8 2.3 0 11.5z" fill="#3d7439" stroke="#1f3f22" stroke-width=".8"/><path d="M0 -6.9V8.0" stroke="#79b56c" stroke-width=".8"/></g>
<g transform="translate(569.5 542.0) rotate(170)"><path d="M0 7.0C-10.5 1.4 -8.7 -7.7 -1.7 -5.3L0 -4.2L1.7 -5.3C8.7 -7.7 10.5 1.4 0 7.0z" fill="#3f7a3a" stroke="#1f3f22" stroke-width=".8"/><path d="M0 -4.2V4.9" stroke="#79b56c" stroke-width=".8"/></g>
<g transform="translate(585.0 551.0) rotate(-80)"><path d="M0 9.5C-8.2 1.9 -6.8 -10.5 -1.3 -7.2L0 -5.7L1.3 -7.2C6.8 -10.5 8.2 1.9 0 9.5z" fill="#3d7439" stroke="#1f3f22" stroke-width=".8"/><path d="M0 -5.7V6.6" stroke="#79b56c" stroke-width=".8"/></g>
<g transform="translate(523.0 555.0) rotate(82)"><path d="M0 10.0C-8.2 2.0 -6.8 -11.0 -1.3 -7.6L0 -6.0L1.3 -7.6C6.8 -11.0 8.2 2.0 0 10.0z" fill="#3d7439" stroke="#1f3f22" stroke-width=".8"/><path d="M0 -6.0V7.0" stroke="#79b56c" stroke-width=".8"/></g>
<ellipse cx="561.8" cy="608.2" rx="37.5" ry="2.6" fill="#d9d9d9"/>
<path d="M525.5 569.5L528.0 604.5Q528.3 607.0 530.5 607.0L593.0 607.0Q595.2 607.0 595.5 604.5L597.5 569.5z" fill="#b96c2e" stroke="#4b2e1a" stroke-width=".9" stroke-linejoin="round"/>
<path d="M526.1 570.0L596.9 570.0L596.6 572.5L526.4 572.5z" fill="#7a3f16" opacity=".55"/>
<rect x="524.0" y="564.4" width="75.0" height="5.1" rx="1.2" fill="#c07433" stroke="#4b2e1a" stroke-width=".9"/>
<path d="M556 569C554 576 551 578 551 582M566 569C570 574 574 574 575 577" fill="none" stroke="#2f5a2e" stroke-width="1.200"/>
<g transform="translate(515.0 587.0) rotate(-20)"><path d="M0 9.5C-13.5 1.9 -11.2 -10.5 -2.2 -7.2L0 -5.7L2.2 -7.2C11.2 -10.5 13.5 1.9 0 9.5z" fill="#3d7439" stroke="#1f3f22" stroke-width=".8"/><path d="M0 -5.7V6.6" stroke="#79b56c" stroke-width=".8"/></g>
<g transform="translate(551.0 585.0) rotate(0)"><path d="M0 8.0C-14.2 1.6 -11.8 -8.8 -2.3 -6.1L0 -4.8L2.3 -6.1C11.8 -8.8 14.2 1.6 0 8.0z" fill="#3d7439" stroke="#1f3f22" stroke-width=".8"/><path d="M0 -4.8V5.6" stroke="#79b56c" stroke-width=".8"/></g>
<g transform="translate(575.5 580.0) rotate(-8)"><path d="M0 7.5C-12.8 1.5 -10.5 -8.2 -2.0 -5.7L0 -4.5L2.0 -5.7C10.5 -8.2 12.8 1.5 0 7.5z" fill="#4a8a45" stroke="#1f3f22" stroke-width=".8"/><path d="M0 -4.5V5.2" stroke="#79b56c" stroke-width=".8"/></g>
<g transform="translate(605.5 585.0) rotate(15)"><path d="M0 9.0C-11.2 1.8 -9.3 -9.9 -1.8 -6.8L0 -5.4L1.8 -6.8C9.3 -9.9 11.2 1.8 0 9.0z" fill="#3d7439" stroke="#1f3f22" stroke-width=".8"/><path d="M0 -5.4V6.3" stroke="#79b56c" stroke-width=".8"/></g>
<text x="547.8" y="596.6" font-size="8" font-weight="bold" textLength="36.2" lengthAdjust="spacingAndGlyphs" fill="#2f1c10" >Фізичні</text>
<text x="549.0" y="604.2" font-size="8" font-weight="bold" textLength="34.0" lengthAdjust="spacingAndGlyphs" fill="#2f1c10" >вправи</text>
<path d="M651.2 460.0Q651.0 449.5 652.8 439.0" fill="none" stroke="#232623" stroke-width="1.4" stroke-linecap="round"/>
<ellipse cx="648.2" cy="454.6" rx="3.4" ry="1.6" transform="rotate(-153 648.2 454.6)" fill="#4f5a55" stroke="#232623" stroke-width="1"/>
<ellipse cx="654.3" cy="454.7" rx="3.4" ry="1.6" transform="rotate(-25 654.3 454.7)" fill="#4f5a55" stroke="#232623" stroke-width="1"/>
<ellipse cx="648.9" cy="447.6" rx="3.0" ry="1.4" transform="rotate(-149 648.9 447.6)" fill="#8fa39a" stroke="#232623" stroke-width="1"/>
<ellipse cx="654.4" cy="448.0" rx="3.0" ry="1.4" transform="rotate(-21 654.4 448.0)" fill="#8fa39a" stroke="#232623" stroke-width="1"/>
<ellipse cx="650.1" cy="440.6" rx="2.7" ry="1.3" transform="rotate(-146 650.1 440.6)" fill="#4f5a55" stroke="#232623" stroke-width="1"/>
<ellipse cx="654.9" cy="441.3" rx="2.7" ry="1.3" transform="rotate(-18 654.9 441.3)" fill="#4f5a55" stroke="#232623" stroke-width="1"/>
<ellipse cx="651.9" cy="437.0" rx="2.5" ry="1.2" transform="rotate(-115 651.9 437.0)" fill="#6f8279" stroke="#232623" stroke-width="1"/>
<ellipse cx="654.3" cy="437.5" rx="2.5" ry="1.2" transform="rotate(-45 654.3 437.5)" fill="#6f8279" stroke="#232623" stroke-width="1"/>
<path d="M668.7 460.0Q663.6 440.8 650.5 421.5" fill="none" stroke="#232623" stroke-width="1.4" stroke-linecap="round"/>
<ellipse cx="663.3" cy="454.1" rx="3.9" ry="1.8" transform="rotate(-172 663.3 454.1)" fill="#aebbb2" stroke="#232623" stroke-width="1"/>
<ellipse cx="670.0" cy="452.0" rx="3.9" ry="1.8" transform="rotate(-44 670.0 452.0)" fill="#aebbb2" stroke="#232623" stroke-width="1"/>
<ellipse cx="659.9" cy="444.9" rx="3.6" ry="1.7" transform="rotate(-177 659.9 444.9)" fill="#8fa39a" stroke="#232623" stroke-width="1"/>
<ellipse cx="665.9" cy="442.3" rx="3.6" ry="1.7" transform="rotate(-49 665.9 442.3)" fill="#8fa39a" stroke="#232623" stroke-width="1"/>
<ellipse cx="655.6" cy="435.6" rx="3.3" ry="1.5" transform="rotate(-182 655.6 435.6)" fill="#aebbb2" stroke="#232623" stroke-width="1"/>
<ellipse cx="660.9" cy="432.8" rx="3.3" ry="1.5" transform="rotate(-54 660.9 432.8)" fill="#aebbb2" stroke="#232623" stroke-width="1"/>
<ellipse cx="650.4" cy="426.2" rx="3.0" ry="1.4" transform="rotate(-186 650.4 426.2)" fill="#8fa39a" stroke="#232623" stroke-width="1"/>
<ellipse cx="654.9" cy="423.3" rx="3.0" ry="1.4" transform="rotate(-58 654.9 423.3)" fill="#8fa39a" stroke="#232623" stroke-width="1"/>
<ellipse cx="648.2" cy="420.6" rx="2.9" ry="1.3" transform="rotate(-159 648.2 420.6)" fill="#6f8279" stroke="#232623" stroke-width="1"/>
<ellipse cx="650.5" cy="419.0" rx="2.9" ry="1.3" transform="rotate(-89 650.5 419.0)" fill="#6f8279" stroke="#232623" stroke-width="1"/>
<path d="M678.3 460.0Q681.0 436.5 691.6 413.0" fill="none" stroke="#232623" stroke-width="1.4" stroke-linecap="round"/>
<ellipse cx="675.7" cy="451.1" rx="4.2" ry="1.9" transform="rotate(-145 675.7 451.1)" fill="#aebbb2" stroke="#232623" stroke-width="1"/>
<ellipse cx="683.2" cy="452.3" rx="4.2" ry="1.9" transform="rotate(-17 683.2 452.3)" fill="#aebbb2" stroke="#232623" stroke-width="1"/>
<ellipse cx="678.6" cy="439.3" rx="3.9" ry="1.8" transform="rotate(-140 678.6 439.3)" fill="#8fa39a" stroke="#232623" stroke-width="1"/>
<ellipse cx="685.4" cy="441.0" rx="3.9" ry="1.8" transform="rotate(-12 685.4 441.0)" fill="#8fa39a" stroke="#232623" stroke-width="1"/>
<ellipse cx="682.4" cy="427.6" rx="3.6" ry="1.6" transform="rotate(-136 682.4 427.6)" fill="#aebbb2" stroke="#232623" stroke-width="1"/>
<ellipse cx="688.5" cy="429.6" rx="3.6" ry="1.6" transform="rotate(-8 688.5 429.6)" fill="#aebbb2" stroke="#232623" stroke-width="1"/>
<ellipse cx="687.2" cy="415.9" rx="3.2" ry="1.5" transform="rotate(-131 687.2 415.9)" fill="#8fa39a" stroke="#232623" stroke-width="1"/>
<ellipse cx="692.5" cy="418.1" rx="3.2" ry="1.5" transform="rotate(-3 692.5 418.1)" fill="#8fa39a" stroke="#232623" stroke-width="1"/>
<ellipse cx="691.1" cy="410.4" rx="3.1" ry="1.4" transform="rotate(-101 691.1 410.4)" fill="#6f8279" stroke="#232623" stroke-width="1"/>
<ellipse cx="693.9" cy="411.7" rx="3.1" ry="1.4" transform="rotate(-31 693.9 411.7)" fill="#6f8279" stroke="#232623" stroke-width="1"/>
<path d="M698.0 460.0Q700.0 443.8 705.9 427.5" fill="none" stroke="#232623" stroke-width="1.4" stroke-linecap="round"/>
<ellipse cx="695.5" cy="451.7" rx="4.1" ry="1.9" transform="rotate(-145 695.5 451.7)" fill="#aebbb2" stroke="#232623" stroke-width="1"/>
<ellipse cx="702.7" cy="452.9" rx="4.1" ry="1.9" transform="rotate(-17 702.7 452.9)" fill="#aebbb2" stroke="#232623" stroke-width="1"/>
<ellipse cx="698.3" cy="440.9" rx="3.6" ry="1.7" transform="rotate(-140 698.3 440.9)" fill="#8fa39a" stroke="#232623" stroke-width="1"/>
<ellipse cx="704.6" cy="442.4" rx="3.6" ry="1.7" transform="rotate(-12 704.6 442.4)" fill="#8fa39a" stroke="#232623" stroke-width="1"/>
<ellipse cx="701.9" cy="430.1" rx="3.2" ry="1.5" transform="rotate(-136 701.9 430.1)" fill="#aebbb2" stroke="#232623" stroke-width="1"/>
<ellipse cx="707.4" cy="431.9" rx="3.2" ry="1.5" transform="rotate(-8 707.4 431.9)" fill="#aebbb2" stroke="#232623" stroke-width="1"/>
<ellipse cx="705.2" cy="425.0" rx="3.0" ry="1.4" transform="rotate(-105 705.2 425.0)" fill="#6f8279" stroke="#232623" stroke-width="1"/>
<ellipse cx="708.0" cy="426.0" rx="3.0" ry="1.4" transform="rotate(-35 708.0 426.0)" fill="#6f8279" stroke="#232623" stroke-width="1"/>
<path d="M716.5 460.0Q718.3 452.2 718.1 444.5" fill="none" stroke="#232623" stroke-width="1.4" stroke-linecap="round"/>
<ellipse cx="715.1" cy="454.2" rx="2.8" ry="1.3" transform="rotate(-145 715.1 454.2)" fill="#4f5a55" stroke="#232623" stroke-width="1"/>
<ellipse cx="720.0" cy="454.9" rx="2.8" ry="1.3" transform="rotate(-17 720.0 454.9)" fill="#4f5a55" stroke="#232623" stroke-width="1"/>
<ellipse cx="716.1" cy="446.9" rx="2.3" ry="1.1" transform="rotate(-152 716.1 446.9)" fill="#8fa39a" stroke="#232623" stroke-width="1"/>
<ellipse cx="720.2" cy="447.0" rx="2.3" ry="1.1" transform="rotate(-24 720.2 447.0)" fill="#8fa39a" stroke="#232623" stroke-width="1"/>
<ellipse cx="717.0" cy="443.1" rx="2.1" ry="1.0" transform="rotate(-126 717.0 443.1)" fill="#6f8279" stroke="#232623" stroke-width="1"/>
<ellipse cx="719.1" cy="443.0" rx="2.1" ry="1.0" transform="rotate(-56 719.1 443.0)" fill="#6f8279" stroke="#232623" stroke-width="1"/>
<ellipse cx="684.4" cy="498.2" rx="42.1" ry="2.6" fill="#d9d9d9"/>
<path d="M642.5 465.0L645.0 493.0Q645.3 497.0 649.0 497.0L719.8 497.0Q723.5 497.0 723.8 493.0L725.0 465.0z" fill="#a9642d" stroke="#4b2e1a" stroke-width=".9" stroke-linejoin="round"/>
<path d="M643.1 465.5L724.4 465.5L724.1 468.0L643.4 468.0z" fill="#6a3a14" opacity=".55"/>
<rect x="641.7" y="459.4" width="84.3" height="5.6" rx="1.2" fill="#b87436" stroke="#4b2e1a" stroke-width=".9"/>
<path d="M644 470c2 8 2 16 2 24" stroke="#7d4418" stroke-width="2.500" opacity=".5" fill="none"/>
<text x="657.8" y="480.7" font-size="9.2" font-weight="bold" textLength="55.2" lengthAdjust="spacingAndGlyphs" fill="#2f1c10" font-style="italic">Усвідом-</text>
<text x="665.5" y="489.9" font-size="9.2" font-weight="bold" textLength="41.3" lengthAdjust="spacingAndGlyphs" fill="#2f1c10" font-style="italic">леність</text>
<ellipse cx="814" cy="462" rx="40" ry="5.500" fill="#d8d8d8"/>
<path d="M781.500 419C781 394.500 844.500 394.500 845 419" fill="none" stroke="#555" stroke-width="2.800"/>
<path d="M781.500 419C781 394.500 844.500 394.500 845 419" fill="none" stroke="#c4c4c4" stroke-width="1.300"/>
<path d="M845 426.500c8-4 15 0 15 8.500s-7 12.500-15 10" fill="none" stroke="#555" stroke-width="3.400"/>
<path d="M845 426.500c8-4 15 0 15 8.500s-7 12.500-15 10" fill="none" stroke="#b9b9b9" stroke-width="1.900"/>
<path d="M781 418v35c0 15 64.500 15 64.500 0v-35z" fill="#aaa" stroke="#4a4a4a" stroke-width="1"/>
<path d="M783 424v30c2 4 6 6 10 7v-36z" fill="#8e8e8e" opacity=".7"/>
<path d="M838 424v33c3-1 5-2.500 6.500-4v-30z" fill="#999" opacity=".8"/>
<path d="M840.500 426v30" stroke="#e6e6e6" stroke-width="1.200"/>
<ellipse cx="813.200" cy="418.300" rx="32.200" ry="4" fill="#dcdcdc" stroke="#4a4a4a" stroke-width="1"/>
<path d="M783 418.500c6-3 16-3.800 26-3.800l2 5.500c-10 .3-22-.2-28-1.700z" fill="#8f8f8f"/>
<path d="M750.500 414.500L795 426c3 1 2 9-3.500 9.500L747.500 424z" fill="#ababab" stroke="#4a4a4a" stroke-width=".9" stroke-linejoin="round"/>
<path d="M752 420.500L790 431" stroke="#c4c4c4" stroke-width="2" opacity=".7"/>
<ellipse cx="743.700" cy="417.200" rx="8" ry="9" transform="rotate(25 743.7 417.2)" fill="#8c8c8c" stroke="#4a4a4a" stroke-width=".9"/>
<g fill="#b5b5b5"><circle cx="741" cy="413.500" r=".8"/><circle cx="745" cy="414" r=".8"/><circle cx="743" cy="418" r=".8"/><circle cx="740" cy="420.500" r=".8"/><circle cx="746.500" cy="420.500" r=".8"/><circle cx="747.500" cy="416.500" r=".8"/><circle cx="739.500" cy="416.500" r=".8"/><circle cx="743.500" cy="422.500" r=".7"/></g>
<path d="M779.500 481C779 472 773 465.500 763 468M769 481.500C762 476 751 477 748.500 490M785 481C787 474 796 473 801 476.500" fill="none" stroke="#5a5f58" stroke-width="1.700" stroke-linecap="round"/>
<path d="M0 4.500C-5 1 -3.800 -4.200 0 -3C3.800 -4.200 5 1 0 4.500z" transform="translate(760 468.5) rotate(-70)" fill="#a3ada3" stroke="#4f544d" stroke-width="1.100"/>
<path d="M0 4.500C-5 1 -3.800 -4.200 0 -3C3.800 -4.200 5 1 0 4.500z" transform="translate(746.8 494) rotate(10)" fill="#a3ada3" stroke="#4f544d" stroke-width="1.100"/>
<path d="M0 4.500C-5 1 -3.800 -4.200 0 -3C3.800 -4.200 5 1 0 4.500z" transform="translate(803.5 477.5) rotate(70)" fill="#a3ada3" stroke="#4f544d" stroke-width="1.100"/>
<ellipse cx="780.2" cy="533.2" rx="24.9" ry="2.6" fill="#d9d9d9"/>
<path d="M756.5 487.2L761.0 529.5Q761.3 532.0 763.5 532.0L796.9 532.0Q799.1 532.0 799.4 529.5L802.5 487.2z" fill="#c8844f" stroke="#4b2e1a" stroke-width=".9" stroke-linejoin="round"/>
<path d="M757.1 487.7L801.9 487.7L801.6 490.2L757.4 490.2z" fill="#8a5a30" opacity=".55"/>
<rect x="754.6" y="481.0" width="49.9" height="6.2" rx="1.2" fill="#cf9560" stroke="#4b2e1a" stroke-width=".9"/>
<text x="762.0" y="501.0" font-size="7.6" font-weight="bold" textLength="38.0" lengthAdjust="spacingAndGlyphs" fill="#3a2212" >Турбота</text>
<text x="771.8" y="508.6" font-size="7.6" font-weight="bold" textLength="16.2" lengthAdjust="spacingAndGlyphs" fill="#3a2212" >про</text>
<text x="770.0" y="516.0" font-size="7.6" font-weight="bold" textLength="21.7" lengthAdjust="spacingAndGlyphs" fill="#3a2212" >себе</text>
<path d="M622 533v-14c0-14 18-14 18 0v14z" fill="#9cc27a" stroke="#3a5a2c" stroke-width=".9"/>
<path d="M626.500 532v-18M631 532v-21M635.500 532v-18" stroke="#7aa55c" stroke-width=".9"/>
<path d="M620 515l2 1M620 523l2 .6M642 517l-2 1M631 506.500v2" stroke="#33401f" stroke-width=".7"/>
<circle cx="675" cy="515.500" r="4.500" fill="#b9a9a9" stroke="#5a4a4a" stroke-width=".8"/>
<path d="M643 533c-3-26 37-28 35 0z" fill="#568d40" stroke="#2f4f24" stroke-width=".9"/>
<g fill="#2f4f24"><circle cx="652" cy="522" r=".5"/><circle cx="660" cy="518" r=".5"/><circle cx="668" cy="522" r=".5"/><circle cx="656" cy="528" r=".5"/><circle cx="664" cy="527" r=".5"/><circle cx="672" cy="528" r=".5"/><circle cx="648" cy="528" r=".5"/></g>
<path d="M682 533v-9c0-3 4-3 4 0v3h2v-4c0-3 4-3 4 0v10z" fill="#4f8a4a" stroke="#2f4f24" stroke-width=".8"/>
<ellipse cx="655.0" cy="577.2" rx="46.2" ry="2.6" fill="#d9d9d9"/>
<path d="M611.0 539.0L622.0 572.0Q622.3 576.0 626.0 576.0L684.0 576.0Q687.7 576.0 688.0 572.0L696.0 539.0z" fill="#cb9d69" stroke="#4b2e1a" stroke-width=".9" stroke-linejoin="round"/>
<path d="M611.6 539.5L695.4 539.5L695.1 542.0L611.9 542.0z" fill="#9a6a3a" opacity=".55"/>
<rect x="607.6" y="531.6" width="92.4" height="7.4" rx="1.2" fill="#d9b68c" stroke="#4b2e1a" stroke-width=".9"/>
<text x="626.4" y="556.5" font-size="7.8" font-weight="bold" textLength="56.6" lengthAdjust="spacingAndGlyphs" fill="#3a2212" >регулярний</text>
<text x="627.0" y="564.4" font-size="7.8" font-weight="bold" textLength="55.0" lengthAdjust="spacingAndGlyphs" fill="#3a2212" >відпочинок</text>
<path d="M723.8 567v-4.500c0-2 2.400-2 2.400 0v4.500z" fill="#3f5f3a" stroke="#26331f" stroke-width=".5"/>
<path d="M731.8 567v-4.500c0-2 2.400-2 2.400 0v4.500z" fill="#3f5f3a" stroke="#26331f" stroke-width=".5"/>
<path d="M739.3 567v-4.500c0-2 2.400-2 2.400 0v4.500z" fill="#3f5f3a" stroke="#26331f" stroke-width=".5"/>
<path d="M747.8 567v-4.500c0-2 2.400-2 2.400 0v4.500z" fill="#3f5f3a" stroke="#26331f" stroke-width=".5"/>
<ellipse cx="735.8" cy="609.2" rx="28.3" ry="2.6" fill="#d9d9d9"/>
<path d="M709.5 572.0L715.6 605.5Q715.9 608.0 718.1 608.0L753.5 608.0Q755.7 608.0 756.0 605.5L761.0 572.0z" fill="#c17b49" stroke="#4b2e1a" stroke-width=".9" stroke-linejoin="round"/>
<path d="M710.1 572.5L760.4 572.5L760.1 575.0L710.4 575.0z" fill="#8a4f28" opacity=".55"/>
<rect x="707.0" y="566.6" width="56.6" height="5.4" rx="1.2" fill="#c98753" stroke="#4b2e1a" stroke-width=".9"/>
<text x="720.0" y="588.0" font-size="7.6" font-weight="bold" textLength="30.0" lengthAdjust="spacingAndGlyphs" fill="#3a2212" >Само-</text>
<text x="721.0" y="596.0" font-size="7.6" font-weight="bold" textLength="29.0" lengthAdjust="spacingAndGlyphs" fill="#3a2212" >оцінка</text>
<path d="M810.500 558C808 546 796 541 787 543C779 544.500 772 546 768 548.500M794 558C790 552 784 552.500 781 556C774 564 776 576 767 584M828 558C830 549 838 546.500 846 547C858 548 868 552 877.500 554M854 559C858 555 864 555 868 558C876 566 876 576 882.500 582.500" fill="none" stroke="#5f6f5c" stroke-width="1.200" stroke-linecap="round"/>
<ellipse cx="826.5" cy="598.2" rx="41.7" ry="2.6" fill="#d9d9d9"/>
<path d="M786.0 565.0L788.5 593.5Q788.8 597.0 792.0 597.0L861.0 597.0Q864.2 597.0 864.5 593.5L866.5 565.0z" fill="#cd6c33" stroke="#4b2e1a" stroke-width=".9" stroke-linejoin="round"/>
<path d="M786.6 565.5L865.9 565.5L865.6 568.0L786.9 568.0z" fill="#9a4418" opacity=".55"/>
<rect x="784.6" y="559.4" width="83.4" height="5.6" rx="1.2" fill="#c66a37" stroke="#4b2e1a" stroke-width=".9"/>
<path d="M816 559C822 555 828 558 829 566C830.500 574 829.500 579 828.500 583.500M831 558.500C840 554 852 558 854 566C855 572 854.500 578 854 582" fill="none" stroke="#ddb98f" stroke-width="1.300" opacity=".9"/>
<path d="M816 559.500C820 556.500 826 557.500 828 561M831 559C838 555.500 848 556.500 852 561" fill="none" stroke="#6f7d68" stroke-width="1.100"/>
<text x="792.8" y="591.0" font-size="9" font-weight="bold" textLength="71.0" lengthAdjust="spacingAndGlyphs" fill="#2f1c10" >Здоровий сон</text>
<!--/MINI--></g><text x="57.500" y="12.300" font-size="6" text-anchor="middle" fill="#555" textLength="47" lengthAdjust="spacingAndGlyphs" font-family="Liberation Sans, sans-serif">ПСИХОЛОГІЧНА</text><text x="57.500" y="19.700" font-size="6" text-anchor="middle" fill="#555" textLength="52" lengthAdjust="spacingAndGlyphs" font-family="Liberation Sans, sans-serif">РЕЗИЛЬЄНТНІСТЬ</text></svg></div>
  <div class="tn" style="top:232px">2</div>
  <div class="th" id="th2" style="top:235px"><svg width="114" height="64" viewBox="0 0 114 64" style="position:absolute;left:0;top:0"><defs><filter id="bt"><feGaussianBlur stdDeviation=".5"/></filter></defs><rect x="17" y="0" width="75" height="64" fill="#c6cbc3"/><rect x="17" y="0" width="75" height="20" fill="#ccd1ca"/><path d="M70 64c2-6 8-9 14-8l8-4v12z" fill="#3c8c4c"/><path d="M84 0l8 0v22c-3-6-6-14-8-22z" fill="#b5c7b2"/><circle cx="66" cy="54" r="2" fill="#eef2ea"/><circle cx="62" cy="57" r="1.500" fill="#eef2ea"/><g filter="url(#bt)"><path d="M49 3h1.500v6h1.500v-5h1.500v5h1.500v-6h1.500v8c-1 2-2.500 2-3.700 3.500-1.200-1.500-2.700-1.500-3.800-3.500z" fill="#2f4a55"/><rect x="49" y="15" width="8" height="1.200" fill="#5a8a5a"/><text x="52" y="34.300" font-size="13.500" text-anchor="middle" fill="#3d433f" textLength="61" lengthAdjust="spacingAndGlyphs" font-family="Liberation Serif, serif">СУМИ</text><text x="53" y="40.300" font-size="4.500" text-anchor="middle" fill="#5a605a" textLength="39" lengthAdjust="spacingAndGlyphs" font-family="Liberation Sans, sans-serif">ВИСТОЯТЬ</text><text x="54" y="61" font-size="1.800" text-anchor="middle" fill="#555" font-family="Liberation Sans, sans-serif">Сумська міська військова адміністрація</text></g></svg></div>
  <div class="tn" style="top:313px">3</div>
  <div class="th" id="th3" style="left:25px;top:314px;width:119px;height:69px;border:2.500px solid #cb7d78;border-radius:6px;box-shadow:0 0 0 1.500px #f6e3df"><svg width="115" height="65" viewBox="0 0 115 65" style="position:absolute;left:0;top:0" font-family="Liberation Sans, sans-serif"><text x="10" y="11.500" font-size="4.600" fill="#6a6a6a" textLength="37" lengthAdjust="spacingAndGlyphs">РЕЗИЛЬЄНТНІСТЬ</text><g font-size="2.700" fill="#555"><text x="9.500" y="20.300" textLength="81" lengthAdjust="spacingAndGlyphs">• Психологічна стійкість – це здатність людини чи</text><text x="11.300" y="24.100" textLength="71" lengthAdjust="spacingAndGlyphs">організму протистояти дії негативних чинників</text><text x="9.500" y="33.800" textLength="92" lengthAdjust="spacingAndGlyphs">• У психологічному розумінні резильєнтність є біопсихосоціальним</text><text x="11.300" y="37.700" textLength="90" lengthAdjust="spacingAndGlyphs">явищем, що охоплює особистісні, міжособистісні та суспільні</text><text x="11.300" y="41.300" textLength="78" lengthAdjust="spacingAndGlyphs">переживання і є закономірним наслідком здорового собі</text><text x="11.300" y="44.700" textLength="66" lengthAdjust="spacingAndGlyphs">процесів та адаптації до несприятливих умов.</text></g></svg></div>
  <div class="tn" style="top:394px">4</div>
  <div class="th" id="th4" style="top:397px"><svg width="114" height="64" viewBox="0 0 114 64" style="position:absolute;left:0;top:0" font-family="Liberation Sans, sans-serif"><text x="9" y="9.800" font-size="4.200" fill="#555" textLength="75" lengthAdjust="spacingAndGlyphs">Фактори впливу на резильєнтність:</text><g font-size="2.600" fill="#666"><text x="8" y="24.500" textLength="42" lengthAdjust="spacingAndGlyphs">• система підтримки людини</text><text x="8" y="29.200" textLength="26" lengthAdjust="spacingAndGlyphs">• особисті історії</text><text x="8" y="34.100" textLength="31" lengthAdjust="spacingAndGlyphs">• самоусвідомлення</text><text x="8" y="38.800" textLength="64" lengthAdjust="spacingAndGlyphs">• внутрішній контекст – мрії, цілі, те, чого хочеш</text><text x="8" y="43.300" textLength="43" lengthAdjust="spacingAndGlyphs">• ритуали для відновлення</text></g></svg></div>
  <div class="tn" style="top:475px">5</div>
  <div class="th" id="th5" style="top:478px"><svg width="114" height="64" viewBox="0 0 114 64" style="position:absolute;left:0;top:0" font-family="Liberation Sans, sans-serif"><g font-size="3.600" fill="#555"><text x="9" y="7.800" textLength="95" lengthAdjust="spacingAndGlyphs">Концепція трьох можливостей у контексті життя</text><text x="9" y="13.300" textLength="38" lengthAdjust="spacingAndGlyphs">людини (В.Степанко)</text></g><text x="21.500" y="29.800" font-size="4.600" font-weight="bold" fill="#4a4a4a" textLength="29.500" lengthAdjust="spacingAndGlyphs">Виснаження</text><text x="54.500" y="29.800" font-size="4.600" fill="#8ba3c4" textLength="34" lengthAdjust="spacingAndGlyphs">проживання</text><text x="43.800" y="37.300" font-size="4.600" fill="#e3b56a" textLength="24" lengthAdjust="spacingAndGlyphs">розвиток</text></svg></div>
  <svg class="abs" style="left:115px;top:355px" width="12" height="18" viewBox="0 0 12 18"><path d="M1 1v13l3.200-3 2.300 5.200 2-.9-2.300-5.100H10.500z" fill="#fff" stroke="#222" stroke-width="1" stroke-linejoin="round"/></svg>
  <div class="abs" style="left:153px;top:142px;width:18px;height:390px;background:#f0eef1"></div>
  <div class="abs" style="left:160px;top:153px;width:7px;height:138px;background:#6a686a;border-radius:3.500px"></div>
  <svg class="abs" style="left:159px;top:143px" width="9" height="6" viewBox="0 0 9 6"><path d="M.5 5.500L4.500 1l4 4.500z" fill="#555"/></svg>
  <div class="abs" style="left:171px;top:142px;width:2px;height:390px;background:#f6f5f6"></div>
  <!-- right scrollbar -->
  <div class="abs" style="left:1057px;top:142px;width:14px;height:390px;background:#f3f1f4"></div>
  <div class="abs" style="left:1061px;top:152px;width:6px;height:26px;background:#6a686a;border-radius:3px"></div>
  <svg class="abs" style="left:1060px;top:143px" width="8" height="6" viewBox="0 0 8 6"><path d="M.5 5L4 1l3.500 4z" fill="#555"/></svg>
  <svg class="abs" style="left:1060px;top:499px" width="8" height="6" viewBox="0 0 8 6"><path d="M.5 1L4 5l3.500-4z" fill="#555"/></svg>
  <svg class="abs" style="left:1060px;top:510px" width="8" height="10" viewBox="0 0 8 10"><path d="M.5 5L4 1l3.500 4zM.5 9L4 5l3.500 4z" fill="#666"/></svg>
  <svg class="abs" style="left:1060px;top:522px" width="8" height="10" viewBox="0 0 8 10"><path d="M.5 1L4 5l3.500-4zM.5 5L4 9l3.500-4z" fill="#666"/></svg>
  <div class="abs" id="slide" style="left:266px;top:148px;width:701px;height:384px;background:#fff;box-shadow:0 0 2px rgba(0,0,0,.25)">
    <div id="ttl" class="abs" style="left:0;top:36px;width:701px;text-align:center;font-size:36.500px;line-height:44.500px;color:#161616;-webkit-text-stroke:.35px #fff;letter-spacing:.45px"><span>ПСИХОЛОГІЧНА</span><br><span style="letter-spacing:-.3px">РЕЗИЛЬЄНТНІСТЬ</span></div>
  </div>
</div>

<!--PLANTS-->
<svg id="plants" class="abs" style="left:0;top:0" width="1200" height="620" viewBox="0 0 1200 620" font-family="'Liberation Sans', sans-serif">
<g>
<path d="M431 440.500H399.500V539H432.500" fill="none" stroke="#8d8d8d" stroke-width="1" stroke-dasharray="3.500 2.200"/>
<path d="M895 440.500H927.500V539H896" fill="none" stroke="#8d8d8d" stroke-width="1" stroke-dasharray="3.500 2.200"/>
<path d="M476.5 428.0Q478.5 398.0 469.0 397.5" fill="none" stroke="#232623" stroke-width="1.4" stroke-linecap="round"/>
<ellipse cx="473.6" cy="418.7" rx="3.6" ry="1.7" transform="rotate(-153 473.6 418.7)" fill="#66787a" stroke="#232623" stroke-width="1"/>
<ellipse cx="480.1" cy="418.8" rx="3.6" ry="1.7" transform="rotate(-25 480.1 418.8)" fill="#66787a" stroke="#232623" stroke-width="1"/>
<ellipse cx="473.1" cy="408.1" rx="3.4" ry="1.6" transform="rotate(-162 473.1 408.1)" fill="#8fa39a" stroke="#232623" stroke-width="1"/>
<ellipse cx="479.1" cy="407.3" rx="3.4" ry="1.6" transform="rotate(-34 479.1 407.3)" fill="#8fa39a" stroke="#232623" stroke-width="1"/>
<ellipse cx="471.3" cy="401.7" rx="3.1" ry="1.5" transform="rotate(-179 471.3 401.7)" fill="#66787a" stroke="#232623" stroke-width="1"/>
<ellipse cx="476.3" cy="399.3" rx="3.1" ry="1.5" transform="rotate(-51 476.3 399.3)" fill="#66787a" stroke="#232623" stroke-width="1"/>
<ellipse cx="468.8" cy="399.7" rx="2.8" ry="1.3" transform="rotate(-219 468.8 399.7)" fill="#8fa39a" stroke="#232623" stroke-width="1"/>
<ellipse cx="470.9" cy="395.2" rx="2.8" ry="1.3" transform="rotate(-91 470.9 395.2)" fill="#8fa39a" stroke="#232623" stroke-width="1"/>
<path d="M469.0 397.5L460.6 400.2" stroke="#6f7f45" stroke-width="1"/>
<circle cx="465.1" cy="400.2" r="2.3" fill="#d5dea6" stroke="#6f7f45" stroke-width=".8"/>
<circle cx="463.8" cy="402.5" r="2.3" fill="#d5dea6" stroke="#6f7f45" stroke-width=".8"/>
<circle cx="460.6" cy="403.5" r="2.3" fill="#d5dea6" stroke="#6f7f45" stroke-width=".8"/>
<circle cx="457.4" cy="402.5" r="2.3" fill="#d5dea6" stroke="#6f7f45" stroke-width=".8"/>
<circle cx="456.1" cy="400.2" r="2.3" fill="#d5dea6" stroke="#6f7f45" stroke-width=".8"/>
<circle cx="457.4" cy="397.9" r="2.3" fill="#d5dea6" stroke="#6f7f45" stroke-width=".8"/>
<circle cx="460.6" cy="396.9" r="2.3" fill="#d5dea6" stroke="#6f7f45" stroke-width=".8"/>
<circle cx="463.8" cy="397.9" r="2.3" fill="#d5dea6" stroke="#6f7f45" stroke-width=".8"/>
<ellipse cx="460.6" cy="400.2" rx="5.0" ry="3.7" fill="#d5dea6"/>
<path d="M458.1 400.2l1.9 -1.4M461.2 400.7l1.9 -1.6" stroke="#8a9a5a" stroke-width=".7" fill="none"/>
<path d="M490.3 428.0Q492.4 411.5 492.5 395.0" fill="none" stroke="#232623" stroke-width="1.4" stroke-linecap="round"/>
<ellipse cx="487.8" cy="421.5" rx="3.6" ry="1.7" transform="rotate(-148 487.8 421.5)" fill="#66787a" stroke="#232623" stroke-width="1"/>
<ellipse cx="494.3" cy="422.2" rx="3.6" ry="1.7" transform="rotate(-20 494.3 422.2)" fill="#66787a" stroke="#232623" stroke-width="1"/>
<ellipse cx="488.7" cy="413.5" rx="3.4" ry="1.6" transform="rotate(-149 488.7 413.5)" fill="#8fa39a" stroke="#232623" stroke-width="1"/>
<ellipse cx="494.8" cy="414.0" rx="3.4" ry="1.6" transform="rotate(-21 494.8 414.0)" fill="#8fa39a" stroke="#232623" stroke-width="1"/>
<ellipse cx="489.5" cy="405.5" rx="3.1" ry="1.5" transform="rotate(-151 489.5 405.5)" fill="#66787a" stroke="#232623" stroke-width="1"/>
<ellipse cx="495.0" cy="405.8" rx="3.1" ry="1.5" transform="rotate(-23 495.0 405.8)" fill="#66787a" stroke="#232623" stroke-width="1"/>
<ellipse cx="490.0" cy="397.4" rx="2.8" ry="1.3" transform="rotate(-153 490.0 397.4)" fill="#8fa39a" stroke="#232623" stroke-width="1"/>
<ellipse cx="495.0" cy="397.5" rx="2.8" ry="1.3" transform="rotate(-25 495.0 397.5)" fill="#8fa39a" stroke="#232623" stroke-width="1"/>
<path d="M492.5 395.0L491.0 389.6" stroke="#6f7f45" stroke-width="1"/>
<circle cx="496.5" cy="389.6" r="1.9" fill="#d5dea6" stroke="#6f7f45" stroke-width=".8"/>
<circle cx="494.9" cy="391.5" r="1.9" fill="#d5dea6" stroke="#6f7f45" stroke-width=".8"/>
<circle cx="491.0" cy="392.3" r="1.9" fill="#d5dea6" stroke="#6f7f45" stroke-width=".8"/>
<circle cx="487.1" cy="391.5" r="1.9" fill="#d5dea6" stroke="#6f7f45" stroke-width=".8"/>
<circle cx="485.5" cy="389.6" r="1.9" fill="#d5dea6" stroke="#6f7f45" stroke-width=".8"/>
<circle cx="487.1" cy="387.7" r="1.9" fill="#d5dea6" stroke="#6f7f45" stroke-width=".8"/>
<circle cx="491.0" cy="386.9" r="1.9" fill="#d5dea6" stroke="#6f7f45" stroke-width=".8"/>
<circle cx="494.9" cy="387.7" r="1.9" fill="#d5dea6" stroke="#6f7f45" stroke-width=".8"/>
<ellipse cx="491.0" cy="389.6" rx="6.1" ry="3.0" fill="#d5dea6"/>
<path d="M488.0 389.6l2.3 -1.1M491.8 390.0l2.3 -1.3" stroke="#8a9a5a" stroke-width=".7" fill="none"/>
<path d="M504.0 428.0Q504.3 412.0 512.6 396.0" fill="none" stroke="#232623" stroke-width="1.4" stroke-linecap="round"/>
<ellipse cx="501.1" cy="421.7" rx="3.6" ry="1.7" transform="rotate(-149 501.1 421.7)" fill="#aebbb2" stroke="#232623" stroke-width="1"/>
<ellipse cx="507.6" cy="422.3" rx="3.6" ry="1.7" transform="rotate(-21 507.6 422.3)" fill="#aebbb2" stroke="#232623" stroke-width="1"/>
<ellipse cx="502.8" cy="413.5" rx="3.4" ry="1.6" transform="rotate(-142 502.8 413.5)" fill="#8fa39a" stroke="#232623" stroke-width="1"/>
<ellipse cx="508.7" cy="414.8" rx="3.4" ry="1.6" transform="rotate(-14 508.7 414.8)" fill="#8fa39a" stroke="#232623" stroke-width="1"/>
<ellipse cx="505.4" cy="405.4" rx="3.1" ry="1.5" transform="rotate(-135 505.4 405.4)" fill="#aebbb2" stroke="#232623" stroke-width="1"/>
<ellipse cx="510.7" cy="407.2" rx="3.1" ry="1.5" transform="rotate(-7 510.7 407.2)" fill="#aebbb2" stroke="#232623" stroke-width="1"/>
<ellipse cx="509.1" cy="397.4" rx="2.8" ry="1.3" transform="rotate(-129 509.1 397.4)" fill="#8fa39a" stroke="#232623" stroke-width="1"/>
<ellipse cx="513.6" cy="399.5" rx="2.8" ry="1.3" transform="rotate(-1 513.6 399.5)" fill="#8fa39a" stroke="#232623" stroke-width="1"/>
<path d="M512.6 396.0L523.0 396.0" stroke="#6f7f45" stroke-width="1"/>
<circle cx="525.6" cy="396.0" r="1.8" fill="#d5dea6" stroke="#6f7f45" stroke-width=".8"/>
<circle cx="524.8" cy="398.2" r="1.8" fill="#d5dea6" stroke="#6f7f45" stroke-width=".8"/>
<circle cx="523.0" cy="399.2" r="1.8" fill="#d5dea6" stroke="#6f7f45" stroke-width=".8"/>
<circle cx="521.2" cy="398.2" r="1.8" fill="#d5dea6" stroke="#6f7f45" stroke-width=".8"/>
<circle cx="520.4" cy="396.0" r="1.8" fill="#d5dea6" stroke="#6f7f45" stroke-width=".8"/>
<circle cx="521.2" cy="393.8" r="1.8" fill="#d5dea6" stroke="#6f7f45" stroke-width=".8"/>
<circle cx="523.0" cy="392.8" r="1.8" fill="#d5dea6" stroke="#6f7f45" stroke-width=".8"/>
<circle cx="524.8" cy="393.8" r="1.8" fill="#d5dea6" stroke="#6f7f45" stroke-width=".8"/>
<ellipse cx="523.0" cy="396.0" rx="2.9" ry="3.5" fill="#d5dea6"/>
<path d="M521.6 396.0l1.1 -1.3M523.4 396.4l1.1 -1.5" stroke="#8a9a5a" stroke-width=".7" fill="none"/>
<path d="M520.0 428.0Q533.6 415.2 541.3 402.5" fill="none" stroke="#232623" stroke-width="1.4" stroke-linecap="round"/>
<ellipse cx="522.5" cy="421.0" rx="3.6" ry="1.7" transform="rotate(-109 522.5 421.0)" fill="#8fa39a" stroke="#232623" stroke-width="1"/>
<ellipse cx="527.1" cy="425.7" rx="3.6" ry="1.7" transform="rotate(19 527.1 425.7)" fill="#8fa39a" stroke="#232623" stroke-width="1"/>
<ellipse cx="528.4" cy="415.0" rx="3.4" ry="1.6" transform="rotate(-112 528.4 415.0)" fill="#8fa39a" stroke="#232623" stroke-width="1"/>
<ellipse cx="532.9" cy="419.0" rx="3.4" ry="1.6" transform="rotate(16 532.9 419.0)" fill="#8fa39a" stroke="#232623" stroke-width="1"/>
<ellipse cx="533.6" cy="409.0" rx="3.1" ry="1.5" transform="rotate(-116 533.6 409.0)" fill="#8fa39a" stroke="#232623" stroke-width="1"/>
<ellipse cx="538.0" cy="412.4" rx="3.1" ry="1.5" transform="rotate(12 538.0 412.4)" fill="#8fa39a" stroke="#232623" stroke-width="1"/>
<ellipse cx="538.1" cy="403.0" rx="2.8" ry="1.3" transform="rotate(-121 538.1 403.0)" fill="#8fa39a" stroke="#232623" stroke-width="1"/>
<ellipse cx="542.3" cy="405.7" rx="2.8" ry="1.3" transform="rotate(7 542.3 405.7)" fill="#8fa39a" stroke="#232623" stroke-width="1"/>
<path d="M541.3 402.5L545.5 399.3" stroke="#6f7f45" stroke-width="1"/>
<circle cx="550.8" cy="399.3" r="2.4" fill="#d5dea6" stroke="#6f7f45" stroke-width=".8"/>
<circle cx="549.3" cy="401.7" r="2.4" fill="#d5dea6" stroke="#6f7f45" stroke-width=".8"/>
<circle cx="545.5" cy="402.8" r="2.4" fill="#d5dea6" stroke="#6f7f45" stroke-width=".8"/>
<circle cx="541.7" cy="401.7" r="2.4" fill="#d5dea6" stroke="#6f7f45" stroke-width=".8"/>
<circle cx="540.2" cy="399.3" r="2.4" fill="#d5dea6" stroke="#6f7f45" stroke-width=".8"/>
<circle cx="541.7" cy="396.9" r="2.4" fill="#d5dea6" stroke="#6f7f45" stroke-width=".8"/>
<circle cx="545.5" cy="395.8" r="2.4" fill="#d5dea6" stroke="#6f7f45" stroke-width=".8"/>
<circle cx="549.3" cy="396.9" r="2.4" fill="#d5dea6" stroke="#6f7f45" stroke-width=".8"/>
<ellipse cx="545.5" cy="399.3" rx="5.9" ry="3.8" fill="#d5dea6"/>
<path d="M542.5 399.3l2.2 -1.4M546.2 399.8l2.2 -1.7" stroke="#8a9a5a" stroke-width=".7" fill="none"/>
<ellipse cx="499.0" cy="468.2" rx="41.0" ry="2.6" fill="#d9d9d9"/>
<path d="M461.0 433.6L470.0 464.5Q470.3 467.0 472.5 467.0L525.5 467.0Q527.7 467.0 528.0 464.5L537.0 433.6z" fill="#c77a32" stroke="#4b2e1a" stroke-width=".9" stroke-linejoin="round"/>
<path d="M461.6 434.1L536.4 434.1L536.1 436.6L461.9 436.6z" fill="#8a4a1a" opacity=".55"/>
<rect x="458.0" y="427.6" width="82.0" height="6.0" rx="1.2" fill="#c4732f" stroke="#4b2e1a" stroke-width=".9"/>
<text x="483.0" y="448.0" font-size="9.3" font-weight="bold" textLength="35.0" lengthAdjust="spacingAndGlyphs" fill="#3a2212" >Само-</text>
<text x="475.0" y="457.5" font-size="9.3" font-weight="bold" textLength="53.0" lengthAdjust="spacingAndGlyphs" fill="#3a2212" >співчуття</text>
<path d="M545.8 479C543.3 463.4 546.4 457.6 550.9 440.0C553.1 451.7 556.4 461.4 553.4 479z" fill="#8faa8c" stroke="#4a5a4c" stroke-width=".8"/>
<path d="M549.6 478C548.1 463.4 549.4 457.6 550.9 444.0" fill="none" stroke="#c2d4c0" stroke-width="1.3"/>
<path d="M588.4 479C585.9 461.8 590.6 455.4 595.1 436.0C597.3 448.9 600.6 459.6 597.6 479z" fill="#5f8c5a" stroke="#4a5a4c" stroke-width=".8"/>
<path d="M593.0 478C591.5 461.8 593.6 455.4 595.1 440.0" fill="none" stroke="#a9c7a4" stroke-width="1.3"/>
<path d="M552.5 479C550.0 460.4 563.1 453.4 567.6 432.5C569.8 446.4 568.0 458.1 565.0 479z" fill="#3f6b40" stroke="#4a5a4c" stroke-width=".8"/>
<path d="M558.8 478C557.2 460.4 566.1 453.4 567.6 436.5" fill="none" stroke="#5f8c5a" stroke-width="1.3"/>
<path d="M579.2 479C576.7 467.8 580.5 463.6 585.0 451.0C587.2 459.4 590.6 466.4 587.6 479z" fill="#3a6a3c" stroke="#4a5a4c" stroke-width=".8"/>
<path d="M583.4 478C581.9 467.8 583.5 463.6 585.0 455.0" fill="none" stroke="#5a8a58" stroke-width="1.3"/>
<path d="M565.9 479C563.4 459.8 572.2 452.6 576.7 431.0C578.9 445.4 581.4 457.4 578.4 479z" fill="#5a8f55" stroke="#4a5a4c" stroke-width=".8"/>
<path d="M572.1 478C570.6 459.8 575.2 452.6 576.7 435.0" fill="none" stroke="#b4d0ae" stroke-width="1.3"/>
<ellipse cx="571.0" cy="521.4" rx="28.4" ry="2.6" fill="#d9d9d9"/>
<path d="M545.5 484.3L551.0 517.7Q551.3 520.2 553.5 520.2L588.5 520.2Q590.7 520.2 591.0 517.7L596.5 484.3z" fill="#c87a3a" stroke="#4b2e1a" stroke-width=".9" stroke-linejoin="round"/>
<path d="M546.1 484.8L595.9 484.8L595.6 487.3L546.4 487.3z" fill="#8a4a1a" opacity=".55"/>
<rect x="542.5" y="477.6" width="56.8" height="6.7" rx="1.2" fill="#cd884a" stroke="#4b2e1a" stroke-width=".9"/>
<text x="557.5" y="498.0" font-size="5.6" font-weight="bold" textLength="29.1" lengthAdjust="spacingAndGlyphs" fill="#3a2212" >Здорове</text>
<text x="552.0" y="503.7" font-size="5.6" font-weight="bold" textLength="39.0" lengthAdjust="spacingAndGlyphs" fill="#3a2212" >харчування</text>
<path d="M475 503c-4.500 0-8.500-2-8.500-6.500v-5c0-4 6-4 6 0v3c0 1.500 1 2 2.500 2z" fill="#86ae5c" stroke="#3a5a2c" stroke-width=".8"/>
<path d="M488 506c3.500 0 6.500-1.500 6.500-5.500v-3.500c0-3.500-5-3.500-5 0v2c0 1.200-.7 1.800-1.500 1.800z" fill="#86ae5c" stroke="#3a5a2c" stroke-width=".8"/>
<path d="M474 512v-31c0-10.500 15-10.500 15 0v31z" fill="#8ab460" stroke="#3a5a2c" stroke-width=".9"/>
<path d="M478 511v-32M481.500 511v-35M485 511v-32" stroke="#5f8c44" stroke-width=".9" fill="none"/>
<path d="M472 480l2 1M472 490l2 .5M490 484l-2 .8M491 478l-2 1M481 472v2" stroke="#33401f" stroke-width=".7"/>
<ellipse cx="484.8" cy="562.7" rx="25.8" ry="2.6" fill="#d9d9d9"/>
<path d="M461.5 517.0L466.5 559.0Q466.8 561.5 469.0 561.5L500.5 561.5Q502.7 561.5 503.0 559.0L507.0 517.0z" fill="#c98a4f" stroke="#4b2e1a" stroke-width=".9" stroke-linejoin="round"/>
<path d="M462.1 517.5L506.4 517.5L506.1 520.0L462.4 520.0z" fill="#8a5a2a" opacity=".55"/>
<rect x="458.5" y="511.0" width="51.5" height="6.0" rx="1.2" fill="#d19a62" stroke="#4b2e1a" stroke-width=".9"/>
<text x="473.7" y="532.2" font-size="6.8" font-weight="bold" textLength="25.3" lengthAdjust="spacingAndGlyphs" fill="#3a2212" >Чесна</text>
<text x="467.7" y="539.6" font-size="6.8" font-weight="bold" textLength="37.6" lengthAdjust="spacingAndGlyphs" fill="#3a2212" >Розмова</text>
<text x="483.4" y="546.4" font-size="6.8" font-weight="bold" textLength="6.1" lengthAdjust="spacingAndGlyphs" fill="#3a2212" >зі</text>
<text x="472.5" y="553.4" font-size="6.8" font-weight="bold" textLength="29.1" lengthAdjust="spacingAndGlyphs" fill="#3a2212" >Собою</text>
<path d="M558 566C556 552 552 547 546 546M560 566C562 552 566 548 570 546M563 566C568 554 578 551 584 552M553 566C548 556 536 554 526 556M548 567C532 560 520 566 517 580M588 567C600 562 606 570 606 578" fill="none" stroke="#2f5a2e" stroke-width="1.200"/>
<g transform="translate(545.0 543.0) rotate(118)"><path d="M0 11.5C-9.8 2.3 -8.1 -12.7 -1.6 -8.7L0 -6.9L1.6 -8.7C8.1 -12.7 9.8 2.3 0 11.5z" fill="#3d7439" stroke="#1f3f22" stroke-width=".8"/><path d="M0 -6.9V8.0" stroke="#79b56c" stroke-width=".8"/></g>
<g transform="translate(569.5 542.0) rotate(170)"><path d="M0 7.0C-10.5 1.4 -8.7 -7.7 -1.7 -5.3L0 -4.2L1.7 -5.3C8.7 -7.7 10.5 1.4 0 7.0z" fill="#3f7a3a" stroke="#1f3f22" stroke-width=".8"/><path d="M0 -4.2V4.9" stroke="#79b56c" stroke-width=".8"/></g>
<g transform="translate(585.0 551.0) rotate(-80)"><path d="M0 9.5C-8.2 1.9 -6.8 -10.5 -1.3 -7.2L0 -5.7L1.3 -7.2C6.8 -10.5 8.2 1.9 0 9.5z" fill="#3d7439" stroke="#1f3f22" stroke-width=".8"/><path d="M0 -5.7V6.6" stroke="#79b56c" stroke-width=".8"/></g>
<g transform="translate(523.0 555.0) rotate(82)"><path d="M0 10.0C-8.2 2.0 -6.8 -11.0 -1.3 -7.6L0 -6.0L1.3 -7.6C6.8 -11.0 8.2 2.0 0 10.0z" fill="#3d7439" stroke="#1f3f22" stroke-width=".8"/><path d="M0 -6.0V7.0" stroke="#79b56c" stroke-width=".8"/></g>
<ellipse cx="561.8" cy="608.2" rx="37.5" ry="2.6" fill="#d9d9d9"/>
<path d="M525.5 569.5L528.0 604.5Q528.3 607.0 530.5 607.0L593.0 607.0Q595.2 607.0 595.5 604.5L597.5 569.5z" fill="#b96c2e" stroke="#4b2e1a" stroke-width=".9" stroke-linejoin="round"/>
<path d="M526.1 570.0L596.9 570.0L596.6 572.5L526.4 572.5z" fill="#7a3f16" opacity=".55"/>
<rect x="524.0" y="564.4" width="75.0" height="5.1" rx="1.2" fill="#c07433" stroke="#4b2e1a" stroke-width=".9"/>
<path d="M556 569C554 576 551 578 551 582M566 569C570 574 574 574 575 577" fill="none" stroke="#2f5a2e" stroke-width="1.200"/>
<g transform="translate(515.0 587.0) rotate(-20)"><path d="M0 9.5C-13.5 1.9 -11.2 -10.5 -2.2 -7.2L0 -5.7L2.2 -7.2C11.2 -10.5 13.5 1.9 0 9.5z" fill="#3d7439" stroke="#1f3f22" stroke-width=".8"/><path d="M0 -5.7V6.6" stroke="#79b56c" stroke-width=".8"/></g>
<g transform="translate(551.0 585.0) rotate(0)"><path d="M0 8.0C-14.2 1.6 -11.8 -8.8 -2.3 -6.1L0 -4.8L2.3 -6.1C11.8 -8.8 14.2 1.6 0 8.0z" fill="#3d7439" stroke="#1f3f22" stroke-width=".8"/><path d="M0 -4.8V5.6" stroke="#79b56c" stroke-width=".8"/></g>
<g transform="translate(575.5 580.0) rotate(-8)"><path d="M0 7.5C-12.8 1.5 -10.5 -8.2 -2.0 -5.7L0 -4.5L2.0 -5.7C10.5 -8.2 12.8 1.5 0 7.5z" fill="#4a8a45" stroke="#1f3f22" stroke-width=".8"/><path d="M0 -4.5V5.2" stroke="#79b56c" stroke-width=".8"/></g>
<g transform="translate(605.5 585.0) rotate(15)"><path d="M0 9.0C-11.2 1.8 -9.3 -9.9 -1.8 -6.8L0 -5.4L1.8 -6.8C9.3 -9.9 11.2 1.8 0 9.0z" fill="#3d7439" stroke="#1f3f22" stroke-width=".8"/><path d="M0 -5.4V6.3" stroke="#79b56c" stroke-width=".8"/></g>
<text x="547.8" y="596.6" font-size="8" font-weight="bold" textLength="36.2" lengthAdjust="spacingAndGlyphs" fill="#2f1c10" >Фізичні</text>
<text x="549.0" y="604.2" font-size="8" font-weight="bold" textLength="34.0" lengthAdjust="spacingAndGlyphs" fill="#2f1c10" >вправи</text>
<path d="M651.2 460.0Q651.0 449.5 652.8 439.0" fill="none" stroke="#232623" stroke-width="1.4" stroke-linecap="round"/>
<ellipse cx="648.2" cy="454.6" rx="3.4" ry="1.6" transform="rotate(-153 648.2 454.6)" fill="#4f5a55" stroke="#232623" stroke-width="1"/>
<ellipse cx="654.3" cy="454.7" rx="3.4" ry="1.6" transform="rotate(-25 654.3 454.7)" fill="#4f5a55" stroke="#232623" stroke-width="1"/>
<ellipse cx="648.9" cy="447.6" rx="3.0" ry="1.4" transform="rotate(-149 648.9 447.6)" fill="#8fa39a" stroke="#232623" stroke-width="1"/>
<ellipse cx="654.4" cy="448.0" rx="3.0" ry="1.4" transform="rotate(-21 654.4 448.0)" fill="#8fa39a" stroke="#232623" stroke-width="1"/>
<ellipse cx="650.1" cy="440.6" rx="2.7" ry="1.3" transform="rotate(-146 650.1 440.6)" fill="#4f5a55" stroke="#232623" stroke-width="1"/>
<ellipse cx="654.9" cy="441.3" rx="2.7" ry="1.3" transform="rotate(-18 654.9 441.3)" fill="#4f5a55" stroke="#232623" stroke-width="1"/>
<ellipse cx="651.9" cy="437.0" rx="2.5" ry="1.2" transform="rotate(-115 651.9 437.0)" fill="#6f8279" stroke="#232623" stroke-width="1"/>
<ellipse cx="654.3" cy="437.5" rx="2.5" ry="1.2" transform="rotate(-45 654.3 437.5)" fill="#6f8279" stroke="#232623" stroke-width="1"/>
<path d="M668.7 460.0Q663.6 440.8 650.5 421.5" fill="none" stroke="#232623" stroke-width="1.4" stroke-linecap="round"/>
<ellipse cx="663.3" cy="454.1" rx="3.9" ry="1.8" transform="rotate(-172 663.3 454.1)" fill="#aebbb2" stroke="#232623" stroke-width="1"/>
<ellipse cx="670.0" cy="452.0" rx="3.9" ry="1.8" transform="rotate(-44 670.0 452.0)" fill="#aebbb2" stroke="#232623" stroke-width="1"/>
<ellipse cx="659.9" cy="444.9" rx="3.6" ry="1.7" transform="rotate(-177 659.9 444.9)" fill="#8fa39a" stroke="#232623" stroke-width="1"/>
<ellipse cx="665.9" cy="442.3" rx="3.6" ry="1.7" transform="rotate(-49 665.9 442.3)" fill="#8fa39a" stroke="#232623" stroke-width="1"/>
<ellipse cx="655.6" cy="435.6" rx="3.3" ry="1.5" transform="rotate(-182 655.6 435.6)" fill="#aebbb2" stroke="#232623" stroke-width="1"/>
<ellipse cx="660.9" cy="432.8" rx="3.3" ry="1.5" transform="rotate(-54 660.9 432.8)" fill="#aebbb2" stroke="#232623" stroke-width="1"/>
<ellipse cx="650.4" cy="426.2" rx="3.0" ry="1.4" transform="rotate(-186 650.4 426.2)" fill="#8fa39a" stroke="#232623" stroke-width="1"/>
<ellipse cx="654.9" cy="423.3" rx="3.0" ry="1.4" transform="rotate(-58 654.9 423.3)" fill="#8fa39a" stroke="#232623" stroke-width="1"/>
<ellipse cx="648.2" cy="420.6" rx="2.9" ry="1.3" transform="rotate(-159 648.2 420.6)" fill="#6f8279" stroke="#232623" stroke-width="1"/>
<ellipse cx="650.5" cy="419.0" rx="2.9" ry="1.3" transform="rotate(-89 650.5 419.0)" fill="#6f8279" stroke="#232623" stroke-width="1"/>
<path d="M678.3 460.0Q681.0 436.5 691.6 413.0" fill="none" stroke="#232623" stroke-width="1.4" stroke-linecap="round"/>
<ellipse cx="675.7" cy="451.1" rx="4.2" ry="1.9" transform="rotate(-145 675.7 451.1)" fill="#aebbb2" stroke="#232623" stroke-width="1"/>
<ellipse cx="683.2" cy="452.3" rx="4.2" ry="1.9" transform="rotate(-17 683.2 452.3)" fill="#aebbb2" stroke="#232623" stroke-width="1"/>
<ellipse cx="678.6" cy="439.3" rx="3.9" ry="1.8" transform="rotate(-140 678.6 439.3)" fill="#8fa39a" stroke="#232623" stroke-width="1"/>
<ellipse cx="685.4" cy="441.0" rx="3.9" ry="1.8" transform="rotate(-12 685.4 441.0)" fill="#8fa39a" stroke="#232623" stroke-width="1"/>
<ellipse cx="682.4" cy="427.6" rx="3.6" ry="1.6" transform="rotate(-136 682.4 427.6)" fill="#aebbb2" stroke="#232623" stroke-width="1"/>
<ellipse cx="688.5" cy="429.6" rx="3.6" ry="1.6" transform="rotate(-8 688.5 429.6)" fill="#aebbb2" stroke="#232623" stroke-width="1"/>
<ellipse cx="687.2" cy="415.9" rx="3.2" ry="1.5" transform="rotate(-131 687.2 415.9)" fill="#8fa39a" stroke="#232623" stroke-width="1"/>
<ellipse cx="692.5" cy="418.1" rx="3.2" ry="1.5" transform="rotate(-3 692.5 418.1)" fill="#8fa39a" stroke="#232623" stroke-width="1"/>
<ellipse cx="691.1" cy="410.4" rx="3.1" ry="1.4" transform="rotate(-101 691.1 410.4)" fill="#6f8279" stroke="#232623" stroke-width="1"/>
<ellipse cx="693.9" cy="411.7" rx="3.1" ry="1.4" transform="rotate(-31 693.9 411.7)" fill="#6f8279" stroke="#232623" stroke-width="1"/>
<path d="M698.0 460.0Q700.0 443.8 705.9 427.5" fill="none" stroke="#232623" stroke-width="1.4" stroke-linecap="round"/>
<ellipse cx="695.5" cy="451.7" rx="4.1" ry="1.9" transform="rotate(-145 695.5 451.7)" fill="#aebbb2" stroke="#232623" stroke-width="1"/>
<ellipse cx="702.7" cy="452.9" rx="4.1" ry="1.9" transform="rotate(-17 702.7 452.9)" fill="#aebbb2" stroke="#232623" stroke-width="1"/>
<ellipse cx="698.3" cy="440.9" rx="3.6" ry="1.7" transform="rotate(-140 698.3 440.9)" fill="#8fa39a" stroke="#232623" stroke-width="1"/>
<ellipse cx="704.6" cy="442.4" rx="3.6" ry="1.7" transform="rotate(-12 704.6 442.4)" fill="#8fa39a" stroke="#232623" stroke-width="1"/>
<ellipse cx="701.9" cy="430.1" rx="3.2" ry="1.5" transform="rotate(-136 701.9 430.1)" fill="#aebbb2" stroke="#232623" stroke-width="1"/>
<ellipse cx="707.4" cy="431.9" rx="3.2" ry="1.5" transform="rotate(-8 707.4 431.9)" fill="#aebbb2" stroke="#232623" stroke-width="1"/>
<ellipse cx="705.2" cy="425.0" rx="3.0" ry="1.4" transform="rotate(-105 705.2 425.0)" fill="#6f8279" stroke="#232623" stroke-width="1"/>
<ellipse cx="708.0" cy="426.0" rx="3.0" ry="1.4" transform="rotate(-35 708.0 426.0)" fill="#6f8279" stroke="#232623" stroke-width="1"/>
<path d="M716.5 460.0Q718.3 452.2 718.1 444.5" fill="none" stroke="#232623" stroke-width="1.4" stroke-linecap="round"/>
<ellipse cx="715.1" cy="454.2" rx="2.8" ry="1.3" transform="rotate(-145 715.1 454.2)" fill="#4f5a55" stroke="#232623" stroke-width="1"/>
<ellipse cx="720.0" cy="454.9" rx="2.8" ry="1.3" transform="rotate(-17 720.0 454.9)" fill="#4f5a55" stroke="#232623" stroke-width="1"/>
<ellipse cx="716.1" cy="446.9" rx="2.3" ry="1.1" transform="rotate(-152 716.1 446.9)" fill="#8fa39a" stroke="#232623" stroke-width="1"/>
<ellipse cx="720.2" cy="447.0" rx="2.3" ry="1.1" transform="rotate(-24 720.2 447.0)" fill="#8fa39a" stroke="#232623" stroke-width="1"/>
<ellipse cx="717.0" cy="443.1" rx="2.1" ry="1.0" transform="rotate(-126 717.0 443.1)" fill="#6f8279" stroke="#232623" stroke-width="1"/>
<ellipse cx="719.1" cy="443.0" rx="2.1" ry="1.0" transform="rotate(-56 719.1 443.0)" fill="#6f8279" stroke="#232623" stroke-width="1"/>
<ellipse cx="684.4" cy="498.2" rx="42.1" ry="2.6" fill="#d9d9d9"/>
<path d="M642.5 465.0L645.0 493.0Q645.3 497.0 649.0 497.0L719.8 497.0Q723.5 497.0 723.8 493.0L725.0 465.0z" fill="#a9642d" stroke="#4b2e1a" stroke-width=".9" stroke-linejoin="round"/>
<path d="M643.1 465.5L724.4 465.5L724.1 468.0L643.4 468.0z" fill="#6a3a14" opacity=".55"/>
<rect x="641.7" y="459.4" width="84.3" height="5.6" rx="1.2" fill="#b87436" stroke="#4b2e1a" stroke-width=".9"/>
<path d="M644 470c2 8 2 16 2 24" stroke="#7d4418" stroke-width="2.500" opacity=".5" fill="none"/>
<text x="657.8" y="480.7" font-size="9.2" font-weight="bold" textLength="55.2" lengthAdjust="spacingAndGlyphs" fill="#2f1c10" font-style="italic">Усвідом-</text>
<text x="665.5" y="489.9" font-size="9.2" font-weight="bold" textLength="41.3" lengthAdjust="spacingAndGlyphs" fill="#2f1c10" font-style="italic">леність</text>
<ellipse cx="814" cy="462" rx="40" ry="5.500" fill="#d8d8d8"/>
<path d="M781.500 419C781 394.500 844.500 394.500 845 419" fill="none" stroke="#555" stroke-width="2.800"/>
<path d="M781.500 419C781 394.500 844.500 394.500 845 419" fill="none" stroke="#c4c4c4" stroke-width="1.300"/>
<path d="M845 426.500c8-4 15 0 15 8.500s-7 12.500-15 10" fill="none" stroke="#555" stroke-width="3.400"/>
<path d="M845 426.500c8-4 15 0 15 8.500s-7 12.500-15 10" fill="none" stroke="#b9b9b9" stroke-width="1.900"/>
<path d="M781 418v35c0 15 64.500 15 64.500 0v-35z" fill="#aaa" stroke="#4a4a4a" stroke-width="1"/>
<path d="M783 424v30c2 4 6 6 10 7v-36z" fill="#8e8e8e" opacity=".7"/>
<path d="M838 424v33c3-1 5-2.500 6.500-4v-30z" fill="#999" opacity=".8"/>
<path d="M840.500 426v30" stroke="#e6e6e6" stroke-width="1.200"/>
<ellipse cx="813.200" cy="418.300" rx="32.200" ry="4" fill="#dcdcdc" stroke="#4a4a4a" stroke-width="1"/>
<path d="M783 418.500c6-3 16-3.800 26-3.800l2 5.500c-10 .3-22-.2-28-1.700z" fill="#8f8f8f"/>
<path d="M750.500 414.500L795 426c3 1 2 9-3.500 9.500L747.500 424z" fill="#ababab" stroke="#4a4a4a" stroke-width=".9" stroke-linejoin="round"/>
<path d="M752 420.500L790 431" stroke="#c4c4c4" stroke-width="2" opacity=".7"/>
<ellipse cx="743.700" cy="417.200" rx="8" ry="9" transform="rotate(25 743.7 417.2)" fill="#8c8c8c" stroke="#4a4a4a" stroke-width=".9"/>
<g fill="#b5b5b5"><circle cx="741" cy="413.500" r=".8"/><circle cx="745" cy="414" r=".8"/><circle cx="743" cy="418" r=".8"/><circle cx="740" cy="420.500" r=".8"/><circle cx="746.500" cy="420.500" r=".8"/><circle cx="747.500" cy="416.500" r=".8"/><circle cx="739.500" cy="416.500" r=".8"/><circle cx="743.500" cy="422.500" r=".7"/></g>
<path d="M779.500 481C779 472 773 465.500 763 468M769 481.500C762 476 751 477 748.500 490M785 481C787 474 796 473 801 476.500" fill="none" stroke="#5a5f58" stroke-width="1.700" stroke-linecap="round"/>
<path d="M0 4.500C-5 1 -3.800 -4.200 0 -3C3.800 -4.200 5 1 0 4.500z" transform="translate(760 468.5) rotate(-70)" fill="#a3ada3" stroke="#4f544d" stroke-width="1.100"/>
<path d="M0 4.500C-5 1 -3.800 -4.200 0 -3C3.800 -4.200 5 1 0 4.500z" transform="translate(746.8 494) rotate(10)" fill="#a3ada3" stroke="#4f544d" stroke-width="1.100"/>
<path d="M0 4.500C-5 1 -3.800 -4.200 0 -3C3.800 -4.200 5 1 0 4.500z" transform="translate(803.5 477.5) rotate(70)" fill="#a3ada3" stroke="#4f544d" stroke-width="1.100"/>
<ellipse cx="780.2" cy="533.2" rx="24.9" ry="2.6" fill="#d9d9d9"/>
<path d="M756.5 487.2L761.0 529.5Q761.3 532.0 763.5 532.0L796.9 532.0Q799.1 532.0 799.4 529.5L802.5 487.2z" fill="#c8844f" stroke="#4b2e1a" stroke-width=".9" stroke-linejoin="round"/>
<path d="M757.1 487.7L801.9 487.7L801.6 490.2L757.4 490.2z" fill="#8a5a30" opacity=".55"/>
<rect x="754.6" y="481.0" width="49.9" height="6.2" rx="1.2" fill="#cf9560" stroke="#4b2e1a" stroke-width=".9"/>
<text x="762.0" y="501.0" font-size="7.6" font-weight="bold" textLength="38.0" lengthAdjust="spacingAndGlyphs" fill="#3a2212" >Турбота</text>
<text x="771.8" y="508.6" font-size="7.6" font-weight="bold" textLength="16.2" lengthAdjust="spacingAndGlyphs" fill="#3a2212" >про</text>
<text x="770.0" y="516.0" font-size="7.6" font-weight="bold" textLength="21.7" lengthAdjust="spacingAndGlyphs" fill="#3a2212" >себе</text>
<path d="M622 533v-14c0-14 18-14 18 0v14z" fill="#9cc27a" stroke="#3a5a2c" stroke-width=".9"/>
<path d="M626.500 532v-18M631 532v-21M635.500 532v-18" stroke="#7aa55c" stroke-width=".9"/>
<path d="M620 515l2 1M620 523l2 .6M642 517l-2 1M631 506.500v2" stroke="#33401f" stroke-width=".7"/>
<circle cx="675" cy="515.500" r="4.500" fill="#b9a9a9" stroke="#5a4a4a" stroke-width=".8"/>
<path d="M643 533c-3-26 37-28 35 0z" fill="#568d40" stroke="#2f4f24" stroke-width=".9"/>
<g fill="#2f4f24"><circle cx="652" cy="522" r=".5"/><circle cx="660" cy="518" r=".5"/><circle cx="668" cy="522" r=".5"/><circle cx="656" cy="528" r=".5"/><circle cx="664" cy="527" r=".5"/><circle cx="672" cy="528" r=".5"/><circle cx="648" cy="528" r=".5"/></g>
<path d="M682 533v-9c0-3 4-3 4 0v3h2v-4c0-3 4-3 4 0v10z" fill="#4f8a4a" stroke="#2f4f24" stroke-width=".8"/>
<ellipse cx="655.0" cy="577.2" rx="46.2" ry="2.6" fill="#d9d9d9"/>
<path d="M611.0 539.0L622.0 572.0Q622.3 576.0 626.0 576.0L684.0 576.0Q687.7 576.0 688.0 572.0L696.0 539.0z" fill="#cb9d69" stroke="#4b2e1a" stroke-width=".9" stroke-linejoin="round"/>
<path d="M611.6 539.5L695.4 539.5L695.1 542.0L611.9 542.0z" fill="#9a6a3a" opacity=".55"/>
<rect x="607.6" y="531.6" width="92.4" height="7.4" rx="1.2" fill="#d9b68c" stroke="#4b2e1a" stroke-width=".9"/>
<text x="626.4" y="556.5" font-size="7.8" font-weight="bold" textLength="56.6" lengthAdjust="spacingAndGlyphs" fill="#3a2212" >регулярний</text>
<text x="627.0" y="564.4" font-size="7.8" font-weight="bold" textLength="55.0" lengthAdjust="spacingAndGlyphs" fill="#3a2212" >відпочинок</text>
<path d="M723.8 567v-4.500c0-2 2.400-2 2.400 0v4.500z" fill="#3f5f3a" stroke="#26331f" stroke-width=".5"/>
<path d="M731.8 567v-4.500c0-2 2.400-2 2.400 0v4.500z" fill="#3f5f3a" stroke="#26331f" stroke-width=".5"/>
<path d="M739.3 567v-4.500c0-2 2.400-2 2.400 0v4.500z" fill="#3f5f3a" stroke="#26331f" stroke-width=".5"/>
<path d="M747.8 567v-4.500c0-2 2.400-2 2.400 0v4.500z" fill="#3f5f3a" stroke="#26331f" stroke-width=".5"/>
<ellipse cx="735.8" cy="609.2" rx="28.3" ry="2.6" fill="#d9d9d9"/>
<path d="M709.5 572.0L715.6 605.5Q715.9 608.0 718.1 608.0L753.5 608.0Q755.7 608.0 756.0 605.5L761.0 572.0z" fill="#c17b49" stroke="#4b2e1a" stroke-width=".9" stroke-linejoin="round"/>
<path d="M710.1 572.5L760.4 572.5L760.1 575.0L710.4 575.0z" fill="#8a4f28" opacity=".55"/>
<rect x="707.0" y="566.6" width="56.6" height="5.4" rx="1.2" fill="#c98753" stroke="#4b2e1a" stroke-width=".9"/>
<text x="720.0" y="588.0" font-size="7.6" font-weight="bold" textLength="30.0" lengthAdjust="spacingAndGlyphs" fill="#3a2212" >Само-</text>
<text x="721.0" y="596.0" font-size="7.6" font-weight="bold" textLength="29.0" lengthAdjust="spacingAndGlyphs" fill="#3a2212" >оцінка</text>
<path d="M810.500 558C808 546 796 541 787 543C779 544.500 772 546 768 548.500M794 558C790 552 784 552.500 781 556C774 564 776 576 767 584M828 558C830 549 838 546.500 846 547C858 548 868 552 877.500 554M854 559C858 555 864 555 868 558C876 566 876 576 882.500 582.500" fill="none" stroke="#5f6f5c" stroke-width="1.200" stroke-linecap="round"/>
<ellipse cx="826.5" cy="598.2" rx="41.7" ry="2.6" fill="#d9d9d9"/>
<path d="M786.0 565.0L788.5 593.5Q788.8 597.0 792.0 597.0L861.0 597.0Q864.2 597.0 864.5 593.5L866.5 565.0z" fill="#cd6c33" stroke="#4b2e1a" stroke-width=".9" stroke-linejoin="round"/>
<path d="M786.6 565.5L865.9 565.5L865.6 568.0L786.9 568.0z" fill="#9a4418" opacity=".55"/>
<rect x="784.6" y="559.4" width="83.4" height="5.6" rx="1.2" fill="#c66a37" stroke="#4b2e1a" stroke-width=".9"/>
<path d="M816 559C822 555 828 558 829 566C830.500 574 829.500 579 828.500 583.500M831 558.500C840 554 852 558 854 566C855 572 854.500 578 854 582" fill="none" stroke="#ddb98f" stroke-width="1.300" opacity=".9"/>
<path d="M816 559.500C820 556.500 826 557.500 828 561M831 559C838 555.500 848 556.500 852 561" fill="none" stroke="#6f7d68" stroke-width="1.100"/>
<text x="792.8" y="591.0" font-size="9" font-weight="bold" textLength="71.0" lengthAdjust="spacingAndGlyphs" fill="#2f1c10" >Здоровий сон</text>
</g>
</svg>
<!--/PLANTS-->

<!-- BOTTOM BAR -->
<div id="bar" class="abs">
  <svg class="abs" style="left:28px;top:7px" width="20" height="14" viewBox="0 0 20 14"><rect x="1.500" y="2.500" width="11" height="9" rx="2.200" fill="none" stroke="#e8e8e8" stroke-width="1.300"/><path d="M13.500 6l4-2.500v7l-4-2.500z" fill="none" stroke="#e8e8e8" stroke-width="1.200" stroke-linejoin="round"/></svg>
  <svg class="abs" style="left:58px;top:11px" width="8" height="6" viewBox="0 0 8 6"><path d="M1.500 4.500L4 2l2.500 2.500" fill="none" stroke="#ddd" stroke-width="1.300"/></svg>
  <div class="bl" style="left:37.500px">Video</div>
  <svg class="abs" style="left:464px;top:6px" width="18" height="17" viewBox="0 0 18 17"><circle cx="5.500" cy="5" r="2.400" fill="none" stroke="#e8e8e8" stroke-width="1.200"/><path d="M1.500 14.500v-2a2.500 2.500 0 0 1 2.500-2.500h3a2.500 2.500 0 0 1 2.500 2.500v2z" fill="none" stroke="#e8e8e8" stroke-width="1.200"/><circle cx="12.500" cy="6.500" r="1.900" fill="none" stroke="#e8e8e8" stroke-width="1.100"/><path d="M11.500 10.500h2.500a2 2 0 0 1 2 2v2h-4" fill="none" stroke="#e8e8e8" stroke-width="1.100"/></svg>
  <div class="abs" style="left:484px;top:8px;font-size:8px;color:#d8d8d8;line-height:10px">26</div>
  <svg class="abs" style="left:504px;top:11px" width="8" height="6" viewBox="0 0 8 6"><path d="M1.500 4.500L4 2l2.500 2.500" fill="none" stroke="#ddd" stroke-width="1.300"/></svg>
  <div class="bl" style="left:472.500px">Participants</div>
  <svg class="abs" style="left:537px;top:6px" width="18" height="18" viewBox="0 0 18 18"><path d="M6 4V3.500a2 2 0 0 1 2-2h6.500a2 2 0 0 1 2 2v5a2 2 0 0 1-2 2H14" fill="none" stroke="#e8e8e8" stroke-width="1.200"/><path d="M3.500 5h7.500a2 2 0 0 1 2 2v4a2 2 0 0 1-2 2H7l-3 2.500V13h-.5a2 2 0 0 1-2-2V7a2 2 0 0 1 2-2z" fill="none" stroke="#e8e8e8" stroke-width="1.200" stroke-linejoin="round"/><circle cx="4.800" cy="9" r=".8" fill="#e8e8e8"/><circle cx="7.300" cy="9" r=".8" fill="#e8e8e8"/><circle cx="9.800" cy="9" r=".8" fill="#e8e8e8"/></svg>
  <svg class="abs" style="left:564px;top:11px" width="8" height="6" viewBox="0 0 8 6"><path d="M1.500 4.500L4 2l2.500 2.500" fill="none" stroke="#ddd" stroke-width="1.300"/></svg>
  <div class="bl" style="left:546px">Chat</div>
  <svg class="abs" style="left:594px;top:7px" width="18" height="16" viewBox="0 0 18 16"><path d="M9 14C4 10.500 1.500 8 1.500 5.200 1.500 3 3.200 1.500 5.200 1.500 6.800 1.500 8.200 2.400 9 3.800 9.800 2.400 11.200 1.500 12.800 1.500c2 0 3.700 1.500 3.700 3.700C16.500 8 14 10.500 9 14z" fill="none" stroke="#e8e8e8" stroke-width="1.300" stroke-linejoin="round"/></svg>
  <div class="bl" style="left:602.500px">React</div>
  <svg class="abs" style="left:653px;top:7px" width="19" height="16" viewBox="0 0 19 16"><rect x=".5" y="1" width="18" height="14" rx="2.500" fill="#23d959"/><path d="M9.500 3.500l4 4.200h-2.500v4h-3v-4H5.500z" fill="#0a0a0a"/></svg>
  <div class="bl" style="left:662.500px">Share</div>
  <svg class="abs" style="left:713px;top:6px" width="18" height="18" viewBox="0 0 18 18"><path d="M2 7V4.500A2.500 2.500 0 0 1 4.500 2H7M11 2h2.500A2.500 2.500 0 0 1 16 4.500V7M16 11v2.500a2.500 2.500 0 0 1-2.500 2.500H11" fill="none" stroke="#e8e8e8" stroke-width="1.300"/><circle cx="4.800" cy="13.200" r="2.800" fill="none" stroke="#e8e8e8" stroke-width="1.300"/><circle cx="11.800" cy="6.200" r="2" fill="none" stroke="#e8e8e8" stroke-width="1.200"/></svg>
  <div class="bl" style="left:721.500px">Apps</div>
  <svg class="abs" style="left:768px;top:6px" width="18" height="18" viewBox="0 0 18 18"><circle cx="9" cy="9" r="7.400" fill="none" stroke="#e8e8e8" stroke-width="1.300"/><circle cx="5.500" cy="9" r="1" fill="#e8e8e8"/><circle cx="9" cy="9" r="1" fill="#e8e8e8"/><circle cx="12.500" cy="9" r="1" fill="#e8e8e8"/></svg>
  <div class="bl" style="left:777px">More</div>
  <svg class="abs" style="left:1182px;top:6px" width="18" height="18" viewBox="0 0 18 18"><path d="M11 1.500h7v14h-7z" fill="#7a1520"/><path d="M12.500 3h5.500v11h-5.500z" fill="none" stroke="#d23a4a" stroke-width="1.200"/><circle cx="6.500" cy="3.800" r="1.700" fill="none" stroke="#eee" stroke-width="1.100"/><path d="M4.500 7.500c0-1 1-1.500 2-1.500s2 .5 2 1.500l.8 3.500h-1.300l.8 4.500H7l-.5-3-.5 3H4.200L5 11H3.700z" fill="none" stroke="#eee" stroke-width="1.100" stroke-linejoin="round"/></svg>
  <div class="abs" style="left:1181px;top:25px;font-size:8.500px;color:#e0e0e0;line-height:10px;white-space:nowrap">Leave</div>
</div>

</div></body></html>
